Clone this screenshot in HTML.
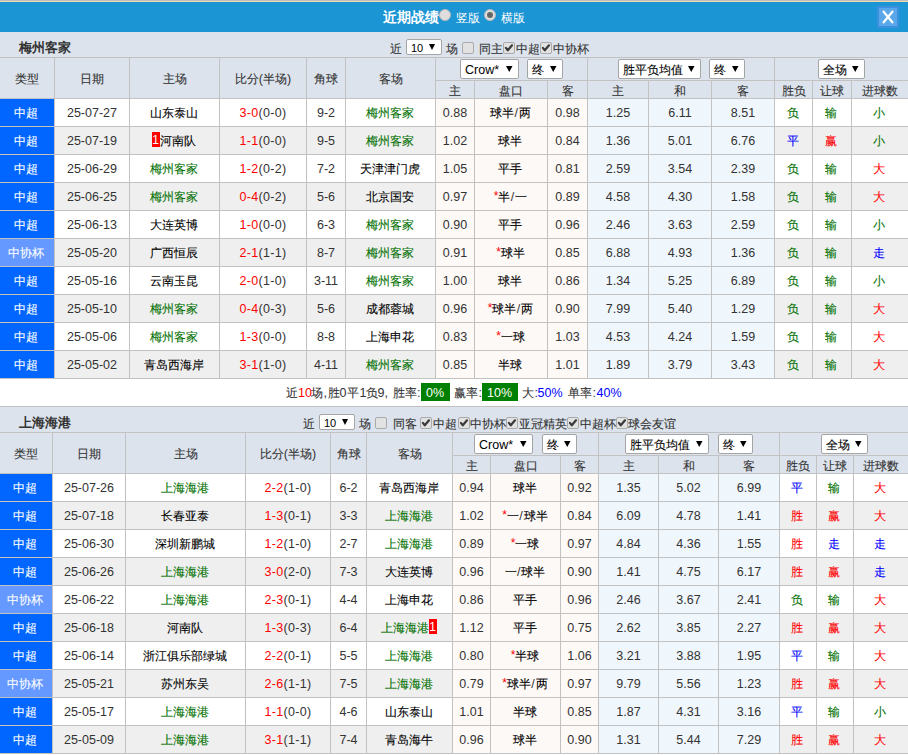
<!DOCTYPE html>
<html><head><meta charset="utf-8"><style>
html,body{margin:0;padding:0;background:#fff}
body{width:908px;height:755px;overflow:hidden;position:relative;font-family:"Liberation Sans",sans-serif;font-size:12.25px;color:#333}
.a{font-size:12.5px;letter-spacing:0px;position:relative;top:1px}
.c{position:relative;top:1px;font-size:12px;letter-spacing:0px;-webkit-text-stroke:0.1px currentColor}
.rc .a,.st .a,.gb .a{font-size:inherit}
.sl{margin:0 1px 0 0.5px}
.k>.a{color:#333}
.sc .a{letter-spacing:0.3px}
.ctl .c{font-size:12px;letter-spacing:0;top:2px}
body>div,body>span,body>svg{position:absolute}
.t{white-space:nowrap}
.rc{display:inline-block;background:#f00;color:#fff;width:8px;height:15px;line-height:15px;text-align:center;font-size:12px;vertical-align:0px;position:relative;top:-1px}
.st{color:#f00;font-size:12px;position:relative;top:-1px}
.ctl{white-space:nowrap;line-height:25px;color:#333;font-size:12px;display:block}
.cb{width:10px;height:10px;border:1px solid #aaa;border-radius:2px;background:#e2e2e2}
.sel{width:36px;height:16px;border:1px solid #a5a5a5;border-radius:2px;background:#fff;box-sizing:border-box}
.sel i,.sel2 i{font-style:normal;position:absolute;right:5px;top:0;font-size:10px}
.sel2{border:1px solid #a5a5a5;border-radius:2px;background:#fff;box-sizing:border-box}
.gb{display:inline-block;background:#008000;color:#fff;padding:0 4px;height:18px;line-height:18px;font-size:14px}
</style></head><body>
<div style="left:0px;top:0px;width:908px;height:1px;background:#bfbfbf;"></div>
<div style="left:0px;top:1px;width:908px;height:1px;background:#efd9a8;"></div>
<div style="left:0px;top:2px;width:908px;height:30px;background:#1b95d4;"></div>
<div class="t" style="left:383px;top:2px;height:30px;line-height:30px;color:#fff;font-size:14px;font-weight:bold;white-space:nowrap">近期战绩</div>
<div style="left:439px;top:9px;width:10px;height:10px;border-radius:50%;background:#dedede;border:1px solid #b9b9b9"></div>
<div class="t" style="left:456px;top:3px;height:30px;line-height:30px;color:#fff;font-size:12px;white-space:nowrap">竖版</div>
<div style="left:484px;top:9px;width:10px;height:10px;border-radius:50%;background:#dedede;border:1px solid #b9b9b9"></div>
<div style="left:487px;top:12px;width:6px;height:6px;border-radius:50%;background:#666"></div>
<div class="t" style="left:501px;top:3px;height:30px;line-height:30px;color:#fff;font-size:12px;white-space:nowrap">横版</div>
<div style="left:877px;top:6px;width:22px;height:22px;background:#3d8fe0;"></div>
<div style="left:879px;top:8px;width:18px;height:18px;background:#5aa8ea;"></div>
<svg style="position:absolute;left:877px;top:6px" width="22" height="22"><path d="M6 5 L16 17 M16 5 L6 17" stroke="#fff" stroke-width="2.2" fill="none"/></svg>
<div style="left:0px;top:32px;width:908px;height:25px;background:#dce3ec;"></div>
<div class="t" style="left:19px;top:35px;height:25px;line-height:25px;font-size:13px;font-weight:bold;color:#333;white-space:nowrap">梅州客家</div>
<div class="t ctl" style="left:389.5px;top:39px;height:16px;line-height:16px;font-size:12px"><span class="c">近</span></div>
<div class="sel" style="left:406px;top:39px"></div>
<div class="t" style="left:411px;top:40px;height:16px;line-height:16px;font-size:11px;color:#000">10</div>
<svg style="left:429px;top:44px" width="6" height="6"><path d="M0 0 L6 0 L3.0 6 Z" fill="#000"/></svg>
<div class="t ctl" style="left:445.5px;top:39px;height:16px;line-height:16px;font-size:12px"><span class="c">场</span></div>
<div class="cb" style="left:462px;top:42px"></div>
<div class="t ctl" style="left:479px;top:39px;height:16px;line-height:16px;font-size:12px"><span class="c">同主</span></div>
<div class="cb" style="left:503px;top:42px"><svg width="11" height="11" style="position:absolute;left:-1px;top:-1px"><path d="M2.9 5.9 L4.8 8.3 L9 3.3" stroke="#3a3a3a" stroke-width="2.2" stroke-linecap="round" stroke-linejoin="round" fill="none"/></svg></div>
<div class="t ctl" style="left:516px;top:39px;height:16px;line-height:16px;font-size:12px"><span class="c">中超</span></div>
<div class="cb" style="left:540px;top:42px"><svg width="11" height="11" style="position:absolute;left:-1px;top:-1px"><path d="M2.9 5.9 L4.8 8.3 L9 3.3" stroke="#3a3a3a" stroke-width="2.2" stroke-linecap="round" stroke-linejoin="round" fill="none"/></svg></div>
<div class="t ctl" style="left:553px;top:39px;height:16px;line-height:16px;font-size:12px"><span class="c">中协杯</span></div>
<div style="left:0px;top:57px;width:908px;height:1px;background:#c2c2c2;"></div>
<div style="left:0px;top:58px;width:908px;height:40px;background:#dce3ec;"></div>
<div style="left:435px;top:80px;width:473px;height:1px;background:#c2c2c2;"></div>
<div style="left:0px;top:98px;width:908px;height:1px;background:#c2c2c2;"></div>
<div style="left:54px;top:57px;width:1px;height:41px;background:#c2c2c2;"></div>
<div style="left:129px;top:57px;width:1px;height:41px;background:#c2c2c2;"></div>
<div style="left:219px;top:57px;width:1px;height:41px;background:#c2c2c2;"></div>
<div style="left:306px;top:57px;width:1px;height:41px;background:#c2c2c2;"></div>
<div style="left:345px;top:57px;width:1px;height:41px;background:#c2c2c2;"></div>
<div style="left:435px;top:57px;width:1px;height:41px;background:#c2c2c2;"></div>
<div style="left:474px;top:80px;width:1px;height:18px;background:#c2c2c2;"></div>
<div style="left:547px;top:80px;width:1px;height:18px;background:#c2c2c2;"></div>
<div style="left:587px;top:57px;width:1px;height:41px;background:#c2c2c2;"></div>
<div style="left:648px;top:80px;width:1px;height:18px;background:#c2c2c2;"></div>
<div style="left:711px;top:80px;width:1px;height:18px;background:#c2c2c2;"></div>
<div style="left:774px;top:57px;width:1px;height:41px;background:#c2c2c2;"></div>
<div style="left:812px;top:80px;width:1px;height:18px;background:#c2c2c2;"></div>
<div style="left:851px;top:80px;width:1px;height:18px;background:#c2c2c2;"></div>
<div class="t" style="left:0px;top:58px;width:54px;height:40px;line-height:40px;text-align:center;color:#333;"><span class="c">类型</span></div>
<div class="t" style="left:55px;top:58px;width:74px;height:40px;line-height:40px;text-align:center;color:#333;"><span class="c">日期</span></div>
<div class="t" style="left:130px;top:58px;width:89px;height:40px;line-height:40px;text-align:center;color:#333;"><span class="c">主场</span></div>
<div class="t" style="left:220px;top:58px;width:86px;height:40px;line-height:40px;text-align:center;color:#333;"><span class="c">比分</span><span class="a">(</span><span class="c">半场</span><span class="a">)</span></div>
<div class="t" style="left:307px;top:58px;width:38px;height:40px;line-height:40px;text-align:center;color:#333;"><span class="c">角球</span></div>
<div class="t" style="left:346px;top:58px;width:89px;height:40px;line-height:40px;text-align:center;color:#333;"><span class="c">客场</span></div>
<div class="t" style="left:436px;top:82px;width:38px;height:17px;line-height:17px;text-align:center;color:#333;"><span class="c">主</span></div>
<div class="t" style="left:475px;top:82px;width:72px;height:17px;line-height:17px;text-align:center;color:#333;"><span class="c">盘口</span></div>
<div class="t" style="left:548px;top:82px;width:39px;height:17px;line-height:17px;text-align:center;color:#333;"><span class="c">客</span></div>
<div class="t" style="left:588px;top:82px;width:60px;height:17px;line-height:17px;text-align:center;color:#333;"><span class="c">主</span></div>
<div class="t" style="left:649px;top:82px;width:62px;height:17px;line-height:17px;text-align:center;color:#333;"><span class="c">和</span></div>
<div class="t" style="left:712px;top:82px;width:62px;height:17px;line-height:17px;text-align:center;color:#333;"><span class="c">客</span></div>
<div class="t" style="left:775px;top:82px;width:37px;height:17px;line-height:17px;text-align:center;color:#333;"><span class="c">胜负</span></div>
<div class="t" style="left:813px;top:82px;width:38px;height:17px;line-height:17px;text-align:center;color:#333;"><span class="c">让球</span></div>
<div class="t" style="left:852px;top:82px;width:56px;height:17px;line-height:17px;text-align:center;color:#333;"><span class="c">进球数</span></div>
<div style="left:0px;top:99px;width:54px;height:27px;background:#0066ff;"></div>
<div style="left:55px;top:99px;width:380px;height:27px;background:#fff;"></div>
<div style="left:436px;top:99px;width:151px;height:27px;background:#fdf9f6;"></div>
<div style="left:588px;top:99px;width:186px;height:27px;background:#f0f7fc;"></div>
<div style="left:775px;top:99px;width:133px;height:27px;background:#fff;"></div>
<div style="left:0px;top:126px;width:908px;height:1px;background:#c2c2c2;"></div>
<div style="left:54px;top:99px;width:1px;height:27px;background:#c2c2c2;"></div>
<div style="left:129px;top:99px;width:1px;height:27px;background:#c2c2c2;"></div>
<div style="left:219px;top:99px;width:1px;height:27px;background:#c2c2c2;"></div>
<div style="left:306px;top:99px;width:1px;height:27px;background:#c2c2c2;"></div>
<div style="left:345px;top:99px;width:1px;height:27px;background:#c2c2c2;"></div>
<div style="left:435px;top:99px;width:1px;height:27px;background:#c2c2c2;"></div>
<div style="left:474px;top:99px;width:1px;height:27px;background:#c2c2c2;"></div>
<div style="left:547px;top:99px;width:1px;height:27px;background:#c2c2c2;"></div>
<div style="left:587px;top:99px;width:1px;height:27px;background:#c2c2c2;"></div>
<div style="left:648px;top:99px;width:1px;height:27px;background:#c2c2c2;"></div>
<div style="left:711px;top:99px;width:1px;height:27px;background:#c2c2c2;"></div>
<div style="left:774px;top:99px;width:1px;height:27px;background:#c2c2c2;"></div>
<div style="left:812px;top:99px;width:1px;height:27px;background:#c2c2c2;"></div>
<div style="left:851px;top:99px;width:1px;height:27px;background:#c2c2c2;"></div>
<div class="t d" style="left:-1px;top:99px;width:54px;height:27px;line-height:27px;text-align:center;color:#fff;"><span class="c">中超</span></div>
<div class="t d k" style="left:55px;top:99px;width:74px;height:27px;line-height:27px;text-align:center;color:#000;"><span class="a">25-07-27</span></div>
<div class="t d k" style="left:129px;top:99px;width:89px;height:27px;line-height:27px;text-align:center;color:#000;"><span class="c">山东泰山</span></div>
<div class="t d k sc" style="left:220px;top:99px;width:86px;height:27px;line-height:27px;text-align:center;color:#000;"><span style="color:#f00"><span class="a">3-0</span></span><span class="a">(0-0)</span></div>
<div class="t d k" style="left:307px;top:99px;width:38px;height:27px;line-height:27px;text-align:center;color:#000;"><span class="a">9-2</span></div>
<div class="t d" style="left:345px;top:99px;width:89px;height:27px;line-height:27px;text-align:center;color:#007000;"><span class="c">梅州客家</span></div>
<div class="t d k" style="left:436px;top:99px;width:38px;height:27px;line-height:27px;text-align:center;color:#000;"><span class="a">0.88</span></div>
<div class="t d k" style="left:474.5px;top:99px;width:72px;height:27px;line-height:27px;text-align:center;color:#000;"><span class="c">球半</span><span class="a sl">/</span><span class="c">两</span></div>
<div class="t d k" style="left:548px;top:99px;width:39px;height:27px;line-height:27px;text-align:center;color:#000;"><span class="a">0.98</span></div>
<div class="t d k" style="left:588px;top:99px;width:60px;height:27px;line-height:27px;text-align:center;color:#000;"><span class="a">1.25</span></div>
<div class="t d k" style="left:649px;top:99px;width:62px;height:27px;line-height:27px;text-align:center;color:#000;"><span class="a">6.11</span></div>
<div class="t d k" style="left:712px;top:99px;width:62px;height:27px;line-height:27px;text-align:center;color:#000;"><span class="a">8.51</span></div>
<div class="t d" style="left:774px;top:99px;width:37px;height:27px;line-height:27px;text-align:center;color:#007000;"><span class="c">负</span></div>
<div class="t d" style="left:812px;top:99px;width:38px;height:27px;line-height:27px;text-align:center;color:#007000;"><span class="c">输</span></div>
<div class="t d" style="left:851px;top:99px;width:56px;height:27px;line-height:27px;text-align:center;color:#007000;"><span class="c">小</span></div>
<div style="left:0px;top:127px;width:54px;height:27px;background:#0066ff;"></div>
<div style="left:55px;top:127px;width:380px;height:27px;background:#efefef;"></div>
<div style="left:436px;top:127px;width:151px;height:27px;background:#fdf9f6;"></div>
<div style="left:588px;top:127px;width:186px;height:27px;background:#f0f7fc;"></div>
<div style="left:775px;top:127px;width:133px;height:27px;background:#efefef;"></div>
<div style="left:0px;top:154px;width:908px;height:1px;background:#c2c2c2;"></div>
<div style="left:54px;top:127px;width:1px;height:27px;background:#c2c2c2;"></div>
<div style="left:129px;top:127px;width:1px;height:27px;background:#c2c2c2;"></div>
<div style="left:219px;top:127px;width:1px;height:27px;background:#c2c2c2;"></div>
<div style="left:306px;top:127px;width:1px;height:27px;background:#c2c2c2;"></div>
<div style="left:345px;top:127px;width:1px;height:27px;background:#c2c2c2;"></div>
<div style="left:435px;top:127px;width:1px;height:27px;background:#c2c2c2;"></div>
<div style="left:474px;top:127px;width:1px;height:27px;background:#c2c2c2;"></div>
<div style="left:547px;top:127px;width:1px;height:27px;background:#c2c2c2;"></div>
<div style="left:587px;top:127px;width:1px;height:27px;background:#c2c2c2;"></div>
<div style="left:648px;top:127px;width:1px;height:27px;background:#c2c2c2;"></div>
<div style="left:711px;top:127px;width:1px;height:27px;background:#c2c2c2;"></div>
<div style="left:774px;top:127px;width:1px;height:27px;background:#c2c2c2;"></div>
<div style="left:812px;top:127px;width:1px;height:27px;background:#c2c2c2;"></div>
<div style="left:851px;top:127px;width:1px;height:27px;background:#c2c2c2;"></div>
<div class="t d" style="left:-1px;top:127px;width:54px;height:27px;line-height:27px;text-align:center;color:#fff;"><span class="c">中超</span></div>
<div class="t d k" style="left:55px;top:127px;width:74px;height:27px;line-height:27px;text-align:center;color:#000;"><span class="a">25-07-19</span></div>
<div class="t d k" style="left:129px;top:127px;width:89px;height:27px;line-height:27px;text-align:center;color:#000;"><span class="rc"><span class="a">1</span></span><span class="c">河南队</span></div>
<div class="t d k sc" style="left:220px;top:127px;width:86px;height:27px;line-height:27px;text-align:center;color:#000;"><span style="color:#f00"><span class="a">1-1</span></span><span class="a">(0-0)</span></div>
<div class="t d k" style="left:307px;top:127px;width:38px;height:27px;line-height:27px;text-align:center;color:#000;"><span class="a">9-5</span></div>
<div class="t d" style="left:345px;top:127px;width:89px;height:27px;line-height:27px;text-align:center;color:#007000;"><span class="c">梅州客家</span></div>
<div class="t d k" style="left:436px;top:127px;width:38px;height:27px;line-height:27px;text-align:center;color:#000;"><span class="a">1.02</span></div>
<div class="t d k" style="left:474px;top:127px;width:72px;height:27px;line-height:27px;text-align:center;color:#000;"><span class="c">球半</span></div>
<div class="t d k" style="left:548px;top:127px;width:39px;height:27px;line-height:27px;text-align:center;color:#000;"><span class="a">0.84</span></div>
<div class="t d k" style="left:588px;top:127px;width:60px;height:27px;line-height:27px;text-align:center;color:#000;"><span class="a">1.36</span></div>
<div class="t d k" style="left:649px;top:127px;width:62px;height:27px;line-height:27px;text-align:center;color:#000;"><span class="a">5.01</span></div>
<div class="t d k" style="left:712px;top:127px;width:62px;height:27px;line-height:27px;text-align:center;color:#000;"><span class="a">6.76</span></div>
<div class="t d" style="left:774px;top:127px;width:37px;height:27px;line-height:27px;text-align:center;color:#00f;"><span class="c">平</span></div>
<div class="t d" style="left:812px;top:127px;width:38px;height:27px;line-height:27px;text-align:center;color:#f00;"><span class="c">赢</span></div>
<div class="t d" style="left:851px;top:127px;width:56px;height:27px;line-height:27px;text-align:center;color:#007000;"><span class="c">小</span></div>
<div style="left:0px;top:155px;width:54px;height:27px;background:#0066ff;"></div>
<div style="left:55px;top:155px;width:380px;height:27px;background:#fff;"></div>
<div style="left:436px;top:155px;width:151px;height:27px;background:#fdf9f6;"></div>
<div style="left:588px;top:155px;width:186px;height:27px;background:#f0f7fc;"></div>
<div style="left:775px;top:155px;width:133px;height:27px;background:#fff;"></div>
<div style="left:0px;top:182px;width:908px;height:1px;background:#c2c2c2;"></div>
<div style="left:54px;top:155px;width:1px;height:27px;background:#c2c2c2;"></div>
<div style="left:129px;top:155px;width:1px;height:27px;background:#c2c2c2;"></div>
<div style="left:219px;top:155px;width:1px;height:27px;background:#c2c2c2;"></div>
<div style="left:306px;top:155px;width:1px;height:27px;background:#c2c2c2;"></div>
<div style="left:345px;top:155px;width:1px;height:27px;background:#c2c2c2;"></div>
<div style="left:435px;top:155px;width:1px;height:27px;background:#c2c2c2;"></div>
<div style="left:474px;top:155px;width:1px;height:27px;background:#c2c2c2;"></div>
<div style="left:547px;top:155px;width:1px;height:27px;background:#c2c2c2;"></div>
<div style="left:587px;top:155px;width:1px;height:27px;background:#c2c2c2;"></div>
<div style="left:648px;top:155px;width:1px;height:27px;background:#c2c2c2;"></div>
<div style="left:711px;top:155px;width:1px;height:27px;background:#c2c2c2;"></div>
<div style="left:774px;top:155px;width:1px;height:27px;background:#c2c2c2;"></div>
<div style="left:812px;top:155px;width:1px;height:27px;background:#c2c2c2;"></div>
<div style="left:851px;top:155px;width:1px;height:27px;background:#c2c2c2;"></div>
<div class="t d" style="left:-1px;top:155px;width:54px;height:27px;line-height:27px;text-align:center;color:#fff;"><span class="c">中超</span></div>
<div class="t d k" style="left:55px;top:155px;width:74px;height:27px;line-height:27px;text-align:center;color:#000;"><span class="a">25-06-29</span></div>
<div class="t d" style="left:129px;top:155px;width:89px;height:27px;line-height:27px;text-align:center;color:#007000;"><span class="c">梅州客家</span></div>
<div class="t d k sc" style="left:220px;top:155px;width:86px;height:27px;line-height:27px;text-align:center;color:#000;"><span style="color:#f00"><span class="a">1-2</span></span><span class="a">(0-2)</span></div>
<div class="t d k" style="left:307px;top:155px;width:38px;height:27px;line-height:27px;text-align:center;color:#000;"><span class="a">7-2</span></div>
<div class="t d k" style="left:345px;top:155px;width:89px;height:27px;line-height:27px;text-align:center;color:#000;"><span class="c">天津津门虎</span></div>
<div class="t d k" style="left:436px;top:155px;width:38px;height:27px;line-height:27px;text-align:center;color:#000;"><span class="a">1.05</span></div>
<div class="t d k" style="left:474px;top:155px;width:72px;height:27px;line-height:27px;text-align:center;color:#000;"><span class="c">平手</span></div>
<div class="t d k" style="left:548px;top:155px;width:39px;height:27px;line-height:27px;text-align:center;color:#000;"><span class="a">0.81</span></div>
<div class="t d k" style="left:588px;top:155px;width:60px;height:27px;line-height:27px;text-align:center;color:#000;"><span class="a">2.59</span></div>
<div class="t d k" style="left:649px;top:155px;width:62px;height:27px;line-height:27px;text-align:center;color:#000;"><span class="a">3.54</span></div>
<div class="t d k" style="left:712px;top:155px;width:62px;height:27px;line-height:27px;text-align:center;color:#000;"><span class="a">2.39</span></div>
<div class="t d" style="left:774px;top:155px;width:37px;height:27px;line-height:27px;text-align:center;color:#007000;"><span class="c">负</span></div>
<div class="t d" style="left:812px;top:155px;width:38px;height:27px;line-height:27px;text-align:center;color:#007000;"><span class="c">输</span></div>
<div class="t d" style="left:851px;top:155px;width:56px;height:27px;line-height:27px;text-align:center;color:#f00;"><span class="c">大</span></div>
<div style="left:0px;top:183px;width:54px;height:27px;background:#0066ff;"></div>
<div style="left:55px;top:183px;width:380px;height:27px;background:#efefef;"></div>
<div style="left:436px;top:183px;width:151px;height:27px;background:#fdf9f6;"></div>
<div style="left:588px;top:183px;width:186px;height:27px;background:#f0f7fc;"></div>
<div style="left:775px;top:183px;width:133px;height:27px;background:#efefef;"></div>
<div style="left:0px;top:210px;width:908px;height:1px;background:#c2c2c2;"></div>
<div style="left:54px;top:183px;width:1px;height:27px;background:#c2c2c2;"></div>
<div style="left:129px;top:183px;width:1px;height:27px;background:#c2c2c2;"></div>
<div style="left:219px;top:183px;width:1px;height:27px;background:#c2c2c2;"></div>
<div style="left:306px;top:183px;width:1px;height:27px;background:#c2c2c2;"></div>
<div style="left:345px;top:183px;width:1px;height:27px;background:#c2c2c2;"></div>
<div style="left:435px;top:183px;width:1px;height:27px;background:#c2c2c2;"></div>
<div style="left:474px;top:183px;width:1px;height:27px;background:#c2c2c2;"></div>
<div style="left:547px;top:183px;width:1px;height:27px;background:#c2c2c2;"></div>
<div style="left:587px;top:183px;width:1px;height:27px;background:#c2c2c2;"></div>
<div style="left:648px;top:183px;width:1px;height:27px;background:#c2c2c2;"></div>
<div style="left:711px;top:183px;width:1px;height:27px;background:#c2c2c2;"></div>
<div style="left:774px;top:183px;width:1px;height:27px;background:#c2c2c2;"></div>
<div style="left:812px;top:183px;width:1px;height:27px;background:#c2c2c2;"></div>
<div style="left:851px;top:183px;width:1px;height:27px;background:#c2c2c2;"></div>
<div class="t d" style="left:-1px;top:183px;width:54px;height:27px;line-height:27px;text-align:center;color:#fff;"><span class="c">中超</span></div>
<div class="t d k" style="left:55px;top:183px;width:74px;height:27px;line-height:27px;text-align:center;color:#000;"><span class="a">25-06-25</span></div>
<div class="t d" style="left:129px;top:183px;width:89px;height:27px;line-height:27px;text-align:center;color:#007000;"><span class="c">梅州客家</span></div>
<div class="t d k sc" style="left:220px;top:183px;width:86px;height:27px;line-height:27px;text-align:center;color:#000;"><span style="color:#f00"><span class="a">0-4</span></span><span class="a">(0-2)</span></div>
<div class="t d k" style="left:307px;top:183px;width:38px;height:27px;line-height:27px;text-align:center;color:#000;"><span class="a">5-6</span></div>
<div class="t d k" style="left:345px;top:183px;width:89px;height:27px;line-height:27px;text-align:center;color:#000;"><span class="c">北京国安</span></div>
<div class="t d k" style="left:436px;top:183px;width:38px;height:27px;line-height:27px;text-align:center;color:#000;"><span class="a">0.97</span></div>
<div class="t d k" style="left:474.5px;top:183px;width:72px;height:27px;line-height:27px;text-align:center;color:#000;"><span class="st"><span class="a">*</span></span><span class="c">半</span><span class="a sl">/</span><span class="c">一</span></div>
<div class="t d k" style="left:548px;top:183px;width:39px;height:27px;line-height:27px;text-align:center;color:#000;"><span class="a">0.89</span></div>
<div class="t d k" style="left:588px;top:183px;width:60px;height:27px;line-height:27px;text-align:center;color:#000;"><span class="a">4.58</span></div>
<div class="t d k" style="left:649px;top:183px;width:62px;height:27px;line-height:27px;text-align:center;color:#000;"><span class="a">4.30</span></div>
<div class="t d k" style="left:712px;top:183px;width:62px;height:27px;line-height:27px;text-align:center;color:#000;"><span class="a">1.58</span></div>
<div class="t d" style="left:774px;top:183px;width:37px;height:27px;line-height:27px;text-align:center;color:#007000;"><span class="c">负</span></div>
<div class="t d" style="left:812px;top:183px;width:38px;height:27px;line-height:27px;text-align:center;color:#007000;"><span class="c">输</span></div>
<div class="t d" style="left:851px;top:183px;width:56px;height:27px;line-height:27px;text-align:center;color:#f00;"><span class="c">大</span></div>
<div style="left:0px;top:211px;width:54px;height:27px;background:#0066ff;"></div>
<div style="left:55px;top:211px;width:380px;height:27px;background:#fff;"></div>
<div style="left:436px;top:211px;width:151px;height:27px;background:#fdf9f6;"></div>
<div style="left:588px;top:211px;width:186px;height:27px;background:#f0f7fc;"></div>
<div style="left:775px;top:211px;width:133px;height:27px;background:#fff;"></div>
<div style="left:0px;top:238px;width:908px;height:1px;background:#c2c2c2;"></div>
<div style="left:54px;top:211px;width:1px;height:27px;background:#c2c2c2;"></div>
<div style="left:129px;top:211px;width:1px;height:27px;background:#c2c2c2;"></div>
<div style="left:219px;top:211px;width:1px;height:27px;background:#c2c2c2;"></div>
<div style="left:306px;top:211px;width:1px;height:27px;background:#c2c2c2;"></div>
<div style="left:345px;top:211px;width:1px;height:27px;background:#c2c2c2;"></div>
<div style="left:435px;top:211px;width:1px;height:27px;background:#c2c2c2;"></div>
<div style="left:474px;top:211px;width:1px;height:27px;background:#c2c2c2;"></div>
<div style="left:547px;top:211px;width:1px;height:27px;background:#c2c2c2;"></div>
<div style="left:587px;top:211px;width:1px;height:27px;background:#c2c2c2;"></div>
<div style="left:648px;top:211px;width:1px;height:27px;background:#c2c2c2;"></div>
<div style="left:711px;top:211px;width:1px;height:27px;background:#c2c2c2;"></div>
<div style="left:774px;top:211px;width:1px;height:27px;background:#c2c2c2;"></div>
<div style="left:812px;top:211px;width:1px;height:27px;background:#c2c2c2;"></div>
<div style="left:851px;top:211px;width:1px;height:27px;background:#c2c2c2;"></div>
<div class="t d" style="left:-1px;top:211px;width:54px;height:27px;line-height:27px;text-align:center;color:#fff;"><span class="c">中超</span></div>
<div class="t d k" style="left:55px;top:211px;width:74px;height:27px;line-height:27px;text-align:center;color:#000;"><span class="a">25-06-13</span></div>
<div class="t d k" style="left:129px;top:211px;width:89px;height:27px;line-height:27px;text-align:center;color:#000;"><span class="c">大连英博</span></div>
<div class="t d k sc" style="left:220px;top:211px;width:86px;height:27px;line-height:27px;text-align:center;color:#000;"><span style="color:#f00"><span class="a">1-0</span></span><span class="a">(0-0)</span></div>
<div class="t d k" style="left:307px;top:211px;width:38px;height:27px;line-height:27px;text-align:center;color:#000;"><span class="a">6-3</span></div>
<div class="t d" style="left:345px;top:211px;width:89px;height:27px;line-height:27px;text-align:center;color:#007000;"><span class="c">梅州客家</span></div>
<div class="t d k" style="left:436px;top:211px;width:38px;height:27px;line-height:27px;text-align:center;color:#000;"><span class="a">0.90</span></div>
<div class="t d k" style="left:474px;top:211px;width:72px;height:27px;line-height:27px;text-align:center;color:#000;"><span class="c">平手</span></div>
<div class="t d k" style="left:548px;top:211px;width:39px;height:27px;line-height:27px;text-align:center;color:#000;"><span class="a">0.96</span></div>
<div class="t d k" style="left:588px;top:211px;width:60px;height:27px;line-height:27px;text-align:center;color:#000;"><span class="a">2.46</span></div>
<div class="t d k" style="left:649px;top:211px;width:62px;height:27px;line-height:27px;text-align:center;color:#000;"><span class="a">3.63</span></div>
<div class="t d k" style="left:712px;top:211px;width:62px;height:27px;line-height:27px;text-align:center;color:#000;"><span class="a">2.59</span></div>
<div class="t d" style="left:774px;top:211px;width:37px;height:27px;line-height:27px;text-align:center;color:#007000;"><span class="c">负</span></div>
<div class="t d" style="left:812px;top:211px;width:38px;height:27px;line-height:27px;text-align:center;color:#007000;"><span class="c">输</span></div>
<div class="t d" style="left:851px;top:211px;width:56px;height:27px;line-height:27px;text-align:center;color:#007000;"><span class="c">小</span></div>
<div style="left:0px;top:239px;width:54px;height:27px;background:#6699ff;"></div>
<div style="left:55px;top:239px;width:380px;height:27px;background:#efefef;"></div>
<div style="left:436px;top:239px;width:151px;height:27px;background:#fdf9f6;"></div>
<div style="left:588px;top:239px;width:186px;height:27px;background:#f0f7fc;"></div>
<div style="left:775px;top:239px;width:133px;height:27px;background:#efefef;"></div>
<div style="left:0px;top:266px;width:908px;height:1px;background:#c2c2c2;"></div>
<div style="left:54px;top:239px;width:1px;height:27px;background:#c2c2c2;"></div>
<div style="left:129px;top:239px;width:1px;height:27px;background:#c2c2c2;"></div>
<div style="left:219px;top:239px;width:1px;height:27px;background:#c2c2c2;"></div>
<div style="left:306px;top:239px;width:1px;height:27px;background:#c2c2c2;"></div>
<div style="left:345px;top:239px;width:1px;height:27px;background:#c2c2c2;"></div>
<div style="left:435px;top:239px;width:1px;height:27px;background:#c2c2c2;"></div>
<div style="left:474px;top:239px;width:1px;height:27px;background:#c2c2c2;"></div>
<div style="left:547px;top:239px;width:1px;height:27px;background:#c2c2c2;"></div>
<div style="left:587px;top:239px;width:1px;height:27px;background:#c2c2c2;"></div>
<div style="left:648px;top:239px;width:1px;height:27px;background:#c2c2c2;"></div>
<div style="left:711px;top:239px;width:1px;height:27px;background:#c2c2c2;"></div>
<div style="left:774px;top:239px;width:1px;height:27px;background:#c2c2c2;"></div>
<div style="left:812px;top:239px;width:1px;height:27px;background:#c2c2c2;"></div>
<div style="left:851px;top:239px;width:1px;height:27px;background:#c2c2c2;"></div>
<div class="t d" style="left:-1px;top:239px;width:54px;height:27px;line-height:27px;text-align:center;color:#fff;"><span class="c">中协杯</span></div>
<div class="t d k" style="left:55px;top:239px;width:74px;height:27px;line-height:27px;text-align:center;color:#000;"><span class="a">25-05-20</span></div>
<div class="t d k" style="left:129px;top:239px;width:89px;height:27px;line-height:27px;text-align:center;color:#000;"><span class="c">广西恒辰</span></div>
<div class="t d k sc" style="left:220px;top:239px;width:86px;height:27px;line-height:27px;text-align:center;color:#000;"><span style="color:#f00"><span class="a">2-1</span></span><span class="a">(1-1)</span></div>
<div class="t d k" style="left:307px;top:239px;width:38px;height:27px;line-height:27px;text-align:center;color:#000;"><span class="a">8-7</span></div>
<div class="t d" style="left:345px;top:239px;width:89px;height:27px;line-height:27px;text-align:center;color:#007000;"><span class="c">梅州客家</span></div>
<div class="t d k" style="left:436px;top:239px;width:38px;height:27px;line-height:27px;text-align:center;color:#000;"><span class="a">0.91</span></div>
<div class="t d k" style="left:474.5px;top:239px;width:72px;height:27px;line-height:27px;text-align:center;color:#000;"><span class="st"><span class="a">*</span></span><span class="c">球半</span></div>
<div class="t d k" style="left:548px;top:239px;width:39px;height:27px;line-height:27px;text-align:center;color:#000;"><span class="a">0.85</span></div>
<div class="t d k" style="left:588px;top:239px;width:60px;height:27px;line-height:27px;text-align:center;color:#000;"><span class="a">6.88</span></div>
<div class="t d k" style="left:649px;top:239px;width:62px;height:27px;line-height:27px;text-align:center;color:#000;"><span class="a">4.93</span></div>
<div class="t d k" style="left:712px;top:239px;width:62px;height:27px;line-height:27px;text-align:center;color:#000;"><span class="a">1.36</span></div>
<div class="t d" style="left:774px;top:239px;width:37px;height:27px;line-height:27px;text-align:center;color:#007000;"><span class="c">负</span></div>
<div class="t d" style="left:812px;top:239px;width:38px;height:27px;line-height:27px;text-align:center;color:#007000;"><span class="c">输</span></div>
<div class="t d" style="left:851px;top:239px;width:56px;height:27px;line-height:27px;text-align:center;color:#00f;"><span class="c">走</span></div>
<div style="left:0px;top:267px;width:54px;height:27px;background:#0066ff;"></div>
<div style="left:55px;top:267px;width:380px;height:27px;background:#fff;"></div>
<div style="left:436px;top:267px;width:151px;height:27px;background:#fdf9f6;"></div>
<div style="left:588px;top:267px;width:186px;height:27px;background:#f0f7fc;"></div>
<div style="left:775px;top:267px;width:133px;height:27px;background:#fff;"></div>
<div style="left:0px;top:294px;width:908px;height:1px;background:#c2c2c2;"></div>
<div style="left:54px;top:267px;width:1px;height:27px;background:#c2c2c2;"></div>
<div style="left:129px;top:267px;width:1px;height:27px;background:#c2c2c2;"></div>
<div style="left:219px;top:267px;width:1px;height:27px;background:#c2c2c2;"></div>
<div style="left:306px;top:267px;width:1px;height:27px;background:#c2c2c2;"></div>
<div style="left:345px;top:267px;width:1px;height:27px;background:#c2c2c2;"></div>
<div style="left:435px;top:267px;width:1px;height:27px;background:#c2c2c2;"></div>
<div style="left:474px;top:267px;width:1px;height:27px;background:#c2c2c2;"></div>
<div style="left:547px;top:267px;width:1px;height:27px;background:#c2c2c2;"></div>
<div style="left:587px;top:267px;width:1px;height:27px;background:#c2c2c2;"></div>
<div style="left:648px;top:267px;width:1px;height:27px;background:#c2c2c2;"></div>
<div style="left:711px;top:267px;width:1px;height:27px;background:#c2c2c2;"></div>
<div style="left:774px;top:267px;width:1px;height:27px;background:#c2c2c2;"></div>
<div style="left:812px;top:267px;width:1px;height:27px;background:#c2c2c2;"></div>
<div style="left:851px;top:267px;width:1px;height:27px;background:#c2c2c2;"></div>
<div class="t d" style="left:-1px;top:267px;width:54px;height:27px;line-height:27px;text-align:center;color:#fff;"><span class="c">中超</span></div>
<div class="t d k" style="left:55px;top:267px;width:74px;height:27px;line-height:27px;text-align:center;color:#000;"><span class="a">25-05-16</span></div>
<div class="t d k" style="left:129px;top:267px;width:89px;height:27px;line-height:27px;text-align:center;color:#000;"><span class="c">云南玉昆</span></div>
<div class="t d k sc" style="left:220px;top:267px;width:86px;height:27px;line-height:27px;text-align:center;color:#000;"><span style="color:#f00"><span class="a">2-0</span></span><span class="a">(1-0)</span></div>
<div class="t d k" style="left:307px;top:267px;width:38px;height:27px;line-height:27px;text-align:center;color:#000;"><span class="a">3-11</span></div>
<div class="t d" style="left:345px;top:267px;width:89px;height:27px;line-height:27px;text-align:center;color:#007000;"><span class="c">梅州客家</span></div>
<div class="t d k" style="left:436px;top:267px;width:38px;height:27px;line-height:27px;text-align:center;color:#000;"><span class="a">1.00</span></div>
<div class="t d k" style="left:474px;top:267px;width:72px;height:27px;line-height:27px;text-align:center;color:#000;"><span class="c">球半</span></div>
<div class="t d k" style="left:548px;top:267px;width:39px;height:27px;line-height:27px;text-align:center;color:#000;"><span class="a">0.86</span></div>
<div class="t d k" style="left:588px;top:267px;width:60px;height:27px;line-height:27px;text-align:center;color:#000;"><span class="a">1.34</span></div>
<div class="t d k" style="left:649px;top:267px;width:62px;height:27px;line-height:27px;text-align:center;color:#000;"><span class="a">5.25</span></div>
<div class="t d k" style="left:712px;top:267px;width:62px;height:27px;line-height:27px;text-align:center;color:#000;"><span class="a">6.89</span></div>
<div class="t d" style="left:774px;top:267px;width:37px;height:27px;line-height:27px;text-align:center;color:#007000;"><span class="c">负</span></div>
<div class="t d" style="left:812px;top:267px;width:38px;height:27px;line-height:27px;text-align:center;color:#007000;"><span class="c">输</span></div>
<div class="t d" style="left:851px;top:267px;width:56px;height:27px;line-height:27px;text-align:center;color:#007000;"><span class="c">小</span></div>
<div style="left:0px;top:295px;width:54px;height:27px;background:#0066ff;"></div>
<div style="left:55px;top:295px;width:380px;height:27px;background:#efefef;"></div>
<div style="left:436px;top:295px;width:151px;height:27px;background:#fdf9f6;"></div>
<div style="left:588px;top:295px;width:186px;height:27px;background:#f0f7fc;"></div>
<div style="left:775px;top:295px;width:133px;height:27px;background:#efefef;"></div>
<div style="left:0px;top:322px;width:908px;height:1px;background:#c2c2c2;"></div>
<div style="left:54px;top:295px;width:1px;height:27px;background:#c2c2c2;"></div>
<div style="left:129px;top:295px;width:1px;height:27px;background:#c2c2c2;"></div>
<div style="left:219px;top:295px;width:1px;height:27px;background:#c2c2c2;"></div>
<div style="left:306px;top:295px;width:1px;height:27px;background:#c2c2c2;"></div>
<div style="left:345px;top:295px;width:1px;height:27px;background:#c2c2c2;"></div>
<div style="left:435px;top:295px;width:1px;height:27px;background:#c2c2c2;"></div>
<div style="left:474px;top:295px;width:1px;height:27px;background:#c2c2c2;"></div>
<div style="left:547px;top:295px;width:1px;height:27px;background:#c2c2c2;"></div>
<div style="left:587px;top:295px;width:1px;height:27px;background:#c2c2c2;"></div>
<div style="left:648px;top:295px;width:1px;height:27px;background:#c2c2c2;"></div>
<div style="left:711px;top:295px;width:1px;height:27px;background:#c2c2c2;"></div>
<div style="left:774px;top:295px;width:1px;height:27px;background:#c2c2c2;"></div>
<div style="left:812px;top:295px;width:1px;height:27px;background:#c2c2c2;"></div>
<div style="left:851px;top:295px;width:1px;height:27px;background:#c2c2c2;"></div>
<div class="t d" style="left:-1px;top:295px;width:54px;height:27px;line-height:27px;text-align:center;color:#fff;"><span class="c">中超</span></div>
<div class="t d k" style="left:55px;top:295px;width:74px;height:27px;line-height:27px;text-align:center;color:#000;"><span class="a">25-05-10</span></div>
<div class="t d" style="left:129px;top:295px;width:89px;height:27px;line-height:27px;text-align:center;color:#007000;"><span class="c">梅州客家</span></div>
<div class="t d k sc" style="left:220px;top:295px;width:86px;height:27px;line-height:27px;text-align:center;color:#000;"><span style="color:#f00"><span class="a">0-4</span></span><span class="a">(0-3)</span></div>
<div class="t d k" style="left:307px;top:295px;width:38px;height:27px;line-height:27px;text-align:center;color:#000;"><span class="a">5-6</span></div>
<div class="t d k" style="left:345px;top:295px;width:89px;height:27px;line-height:27px;text-align:center;color:#000;"><span class="c">成都蓉城</span></div>
<div class="t d k" style="left:436px;top:295px;width:38px;height:27px;line-height:27px;text-align:center;color:#000;"><span class="a">0.96</span></div>
<div class="t d k" style="left:474.5px;top:295px;width:72px;height:27px;line-height:27px;text-align:center;color:#000;"><span class="st"><span class="a">*</span></span><span class="c">球半</span><span class="a sl">/</span><span class="c">两</span></div>
<div class="t d k" style="left:548px;top:295px;width:39px;height:27px;line-height:27px;text-align:center;color:#000;"><span class="a">0.90</span></div>
<div class="t d k" style="left:588px;top:295px;width:60px;height:27px;line-height:27px;text-align:center;color:#000;"><span class="a">7.99</span></div>
<div class="t d k" style="left:649px;top:295px;width:62px;height:27px;line-height:27px;text-align:center;color:#000;"><span class="a">5.40</span></div>
<div class="t d k" style="left:712px;top:295px;width:62px;height:27px;line-height:27px;text-align:center;color:#000;"><span class="a">1.29</span></div>
<div class="t d" style="left:774px;top:295px;width:37px;height:27px;line-height:27px;text-align:center;color:#007000;"><span class="c">负</span></div>
<div class="t d" style="left:812px;top:295px;width:38px;height:27px;line-height:27px;text-align:center;color:#007000;"><span class="c">输</span></div>
<div class="t d" style="left:851px;top:295px;width:56px;height:27px;line-height:27px;text-align:center;color:#f00;"><span class="c">大</span></div>
<div style="left:0px;top:323px;width:54px;height:27px;background:#0066ff;"></div>
<div style="left:55px;top:323px;width:380px;height:27px;background:#fff;"></div>
<div style="left:436px;top:323px;width:151px;height:27px;background:#fdf9f6;"></div>
<div style="left:588px;top:323px;width:186px;height:27px;background:#f0f7fc;"></div>
<div style="left:775px;top:323px;width:133px;height:27px;background:#fff;"></div>
<div style="left:0px;top:350px;width:908px;height:1px;background:#c2c2c2;"></div>
<div style="left:54px;top:323px;width:1px;height:27px;background:#c2c2c2;"></div>
<div style="left:129px;top:323px;width:1px;height:27px;background:#c2c2c2;"></div>
<div style="left:219px;top:323px;width:1px;height:27px;background:#c2c2c2;"></div>
<div style="left:306px;top:323px;width:1px;height:27px;background:#c2c2c2;"></div>
<div style="left:345px;top:323px;width:1px;height:27px;background:#c2c2c2;"></div>
<div style="left:435px;top:323px;width:1px;height:27px;background:#c2c2c2;"></div>
<div style="left:474px;top:323px;width:1px;height:27px;background:#c2c2c2;"></div>
<div style="left:547px;top:323px;width:1px;height:27px;background:#c2c2c2;"></div>
<div style="left:587px;top:323px;width:1px;height:27px;background:#c2c2c2;"></div>
<div style="left:648px;top:323px;width:1px;height:27px;background:#c2c2c2;"></div>
<div style="left:711px;top:323px;width:1px;height:27px;background:#c2c2c2;"></div>
<div style="left:774px;top:323px;width:1px;height:27px;background:#c2c2c2;"></div>
<div style="left:812px;top:323px;width:1px;height:27px;background:#c2c2c2;"></div>
<div style="left:851px;top:323px;width:1px;height:27px;background:#c2c2c2;"></div>
<div class="t d" style="left:-1px;top:323px;width:54px;height:27px;line-height:27px;text-align:center;color:#fff;"><span class="c">中超</span></div>
<div class="t d k" style="left:55px;top:323px;width:74px;height:27px;line-height:27px;text-align:center;color:#000;"><span class="a">25-05-06</span></div>
<div class="t d" style="left:129px;top:323px;width:89px;height:27px;line-height:27px;text-align:center;color:#007000;"><span class="c">梅州客家</span></div>
<div class="t d k sc" style="left:220px;top:323px;width:86px;height:27px;line-height:27px;text-align:center;color:#000;"><span style="color:#f00"><span class="a">1-3</span></span><span class="a">(0-0)</span></div>
<div class="t d k" style="left:307px;top:323px;width:38px;height:27px;line-height:27px;text-align:center;color:#000;"><span class="a">8-8</span></div>
<div class="t d k" style="left:345px;top:323px;width:89px;height:27px;line-height:27px;text-align:center;color:#000;"><span class="c">上海申花</span></div>
<div class="t d k" style="left:436px;top:323px;width:38px;height:27px;line-height:27px;text-align:center;color:#000;"><span class="a">0.83</span></div>
<div class="t d k" style="left:474.5px;top:323px;width:72px;height:27px;line-height:27px;text-align:center;color:#000;"><span class="st"><span class="a">*</span></span><span class="c">一球</span></div>
<div class="t d k" style="left:548px;top:323px;width:39px;height:27px;line-height:27px;text-align:center;color:#000;"><span class="a">1.03</span></div>
<div class="t d k" style="left:588px;top:323px;width:60px;height:27px;line-height:27px;text-align:center;color:#000;"><span class="a">4.53</span></div>
<div class="t d k" style="left:649px;top:323px;width:62px;height:27px;line-height:27px;text-align:center;color:#000;"><span class="a">4.24</span></div>
<div class="t d k" style="left:712px;top:323px;width:62px;height:27px;line-height:27px;text-align:center;color:#000;"><span class="a">1.59</span></div>
<div class="t d" style="left:774px;top:323px;width:37px;height:27px;line-height:27px;text-align:center;color:#007000;"><span class="c">负</span></div>
<div class="t d" style="left:812px;top:323px;width:38px;height:27px;line-height:27px;text-align:center;color:#007000;"><span class="c">输</span></div>
<div class="t d" style="left:851px;top:323px;width:56px;height:27px;line-height:27px;text-align:center;color:#f00;"><span class="c">大</span></div>
<div style="left:0px;top:351px;width:54px;height:27px;background:#0066ff;"></div>
<div style="left:55px;top:351px;width:380px;height:27px;background:#efefef;"></div>
<div style="left:436px;top:351px;width:151px;height:27px;background:#fdf9f6;"></div>
<div style="left:588px;top:351px;width:186px;height:27px;background:#f0f7fc;"></div>
<div style="left:775px;top:351px;width:133px;height:27px;background:#efefef;"></div>
<div style="left:0px;top:378px;width:908px;height:1px;background:#c2c2c2;"></div>
<div style="left:54px;top:351px;width:1px;height:27px;background:#c2c2c2;"></div>
<div style="left:129px;top:351px;width:1px;height:27px;background:#c2c2c2;"></div>
<div style="left:219px;top:351px;width:1px;height:27px;background:#c2c2c2;"></div>
<div style="left:306px;top:351px;width:1px;height:27px;background:#c2c2c2;"></div>
<div style="left:345px;top:351px;width:1px;height:27px;background:#c2c2c2;"></div>
<div style="left:435px;top:351px;width:1px;height:27px;background:#c2c2c2;"></div>
<div style="left:474px;top:351px;width:1px;height:27px;background:#c2c2c2;"></div>
<div style="left:547px;top:351px;width:1px;height:27px;background:#c2c2c2;"></div>
<div style="left:587px;top:351px;width:1px;height:27px;background:#c2c2c2;"></div>
<div style="left:648px;top:351px;width:1px;height:27px;background:#c2c2c2;"></div>
<div style="left:711px;top:351px;width:1px;height:27px;background:#c2c2c2;"></div>
<div style="left:774px;top:351px;width:1px;height:27px;background:#c2c2c2;"></div>
<div style="left:812px;top:351px;width:1px;height:27px;background:#c2c2c2;"></div>
<div style="left:851px;top:351px;width:1px;height:27px;background:#c2c2c2;"></div>
<div class="t d" style="left:-1px;top:351px;width:54px;height:27px;line-height:27px;text-align:center;color:#fff;"><span class="c">中超</span></div>
<div class="t d k" style="left:55px;top:351px;width:74px;height:27px;line-height:27px;text-align:center;color:#000;"><span class="a">25-05-02</span></div>
<div class="t d k" style="left:129px;top:351px;width:89px;height:27px;line-height:27px;text-align:center;color:#000;"><span class="c">青岛西海岸</span></div>
<div class="t d k sc" style="left:220px;top:351px;width:86px;height:27px;line-height:27px;text-align:center;color:#000;"><span style="color:#f00"><span class="a">3-1</span></span><span class="a">(1-0)</span></div>
<div class="t d k" style="left:307px;top:351px;width:38px;height:27px;line-height:27px;text-align:center;color:#000;"><span class="a">4-11</span></div>
<div class="t d" style="left:345px;top:351px;width:89px;height:27px;line-height:27px;text-align:center;color:#007000;"><span class="c">梅州客家</span></div>
<div class="t d k" style="left:436px;top:351px;width:38px;height:27px;line-height:27px;text-align:center;color:#000;"><span class="a">0.85</span></div>
<div class="t d k" style="left:474px;top:351px;width:72px;height:27px;line-height:27px;text-align:center;color:#000;"><span class="c">半球</span></div>
<div class="t d k" style="left:548px;top:351px;width:39px;height:27px;line-height:27px;text-align:center;color:#000;"><span class="a">1.01</span></div>
<div class="t d k" style="left:588px;top:351px;width:60px;height:27px;line-height:27px;text-align:center;color:#000;"><span class="a">1.89</span></div>
<div class="t d k" style="left:649px;top:351px;width:62px;height:27px;line-height:27px;text-align:center;color:#000;"><span class="a">3.79</span></div>
<div class="t d k" style="left:712px;top:351px;width:62px;height:27px;line-height:27px;text-align:center;color:#000;"><span class="a">3.43</span></div>
<div class="t d" style="left:774px;top:351px;width:37px;height:27px;line-height:27px;text-align:center;color:#007000;"><span class="c">负</span></div>
<div class="t d" style="left:812px;top:351px;width:38px;height:27px;line-height:27px;text-align:center;color:#007000;"><span class="c">输</span></div>
<div class="t d" style="left:851px;top:351px;width:56px;height:27px;line-height:27px;text-align:center;color:#f00;"><span class="c">大</span></div>
<div style="left:0px;top:379px;width:908px;height:27px;background:#fff;"></div>
<div style="left:421px;top:383px;width:29px;height:18px;background:#008000;"></div>
<div style="left:482px;top:383px;width:36px;height:18px;background:#008000;"></div>
<div class="t" style="left:285.5px;top:383px;height:18px;line-height:18px;color:#333"><span class="c">近</span></div>
<div class="t" style="left:298px;top:383px;height:18px;line-height:18px;color:#f00"><span class="a">10</span></div>
<div class="t" style="left:311px;top:383px;height:18px;line-height:18px;color:#333"><span class="c">场</span></div>
<div class="t" style="left:323.5px;top:383px;height:18px;line-height:18px;color:#333"><span class="a">,</span></div>
<div class="t" style="left:327.5px;top:383px;height:18px;line-height:18px;color:#333"><span class="c">胜</span></div>
<div class="t" style="left:339.5px;top:383px;height:18px;line-height:18px;color:#333"><span class="a">0</span></div>
<div class="t" style="left:347px;top:383px;height:18px;line-height:18px;color:#333"><span class="c">平</span></div>
<div class="t" style="left:359.5px;top:383px;height:18px;line-height:18px;color:#333"><span class="a">1</span></div>
<div class="t" style="left:365.5px;top:383px;height:18px;line-height:18px;color:#333"><span class="c">负</span></div>
<div class="t" style="left:377.5px;top:383px;height:18px;line-height:18px;color:#333"><span class="a">9</span></div>
<div class="t" style="left:384.5px;top:383px;height:18px;line-height:18px;color:#333"><span class="a">,</span></div>
<div class="t" style="left:392.5px;top:383px;height:18px;line-height:18px;color:#333"><span class="c">胜率</span></div>
<div class="t" style="left:417px;top:383px;height:18px;line-height:18px;color:#333"><span class="a">:</span></div>
<div class="t" style="left:426px;top:383px;height:18px;line-height:18px;color:#fff"><span class="a">0%</span></div>
<div class="t" style="left:454px;top:383px;height:18px;line-height:18px;color:#333"><span class="c">赢率</span></div>
<div class="t" style="left:478.5px;top:383px;height:18px;line-height:18px;color:#333"><span class="a">:</span></div>
<div class="t" style="left:487px;top:383px;height:18px;line-height:18px;color:#fff"><span class="a">10%</span></div>
<div class="t" style="left:521.5px;top:383px;height:18px;line-height:18px;color:#333"><span class="c">大</span></div>
<div class="t" style="left:534.5px;top:383px;height:18px;line-height:18px;color:#333"><span class="a">:</span></div>
<div class="t" style="left:537.5px;top:383px;height:18px;line-height:18px;color:#00f"><span class="a">50%</span></div>
<div class="t" style="left:568px;top:383px;height:18px;line-height:18px;color:#333"><span class="c">单率</span></div>
<div class="t" style="left:592.5px;top:383px;height:18px;line-height:18px;color:#333"><span class="a">:</span></div>
<div class="t" style="left:596.5px;top:383px;height:18px;line-height:18px;color:#00f"><span class="a">40%</span></div>
<div style="left:0px;top:406px;width:908px;height:1px;background:#c2c2c2;"></div>
<div style="left:0px;top:407px;width:908px;height:25px;background:#dce3ec;"></div>
<div class="t" style="left:19px;top:410px;height:25px;line-height:25px;font-size:13px;font-weight:bold;color:#333;white-space:nowrap">上海海港</div>
<div class="t ctl" style="left:302.5px;top:414px;height:16px;line-height:16px;font-size:12px"><span class="c">近</span></div>
<div class="sel" style="left:319px;top:414px"></div>
<div class="t" style="left:324px;top:415px;height:16px;line-height:16px;font-size:11px;color:#000">10</div>
<svg style="left:342px;top:419px" width="6" height="6"><path d="M0 0 L6 0 L3.0 6 Z" fill="#000"/></svg>
<div class="t ctl" style="left:359px;top:414px;height:16px;line-height:16px;font-size:12px"><span class="c">场</span></div>
<div class="cb" style="left:375px;top:417px"></div>
<div class="t ctl" style="left:392.5px;top:414px;height:16px;line-height:16px;font-size:12px"><span class="c">同客</span></div>
<div class="cb" style="left:420px;top:417px"><svg width="11" height="11" style="position:absolute;left:-1px;top:-1px"><path d="M2.9 5.9 L4.8 8.3 L9 3.3" stroke="#3a3a3a" stroke-width="2.2" stroke-linecap="round" stroke-linejoin="round" fill="none"/></svg></div>
<div class="t ctl" style="left:432.5px;top:414px;height:16px;line-height:16px;font-size:12px"><span class="c">中超</span></div>
<div class="cb" style="left:458px;top:417px"><svg width="11" height="11" style="position:absolute;left:-1px;top:-1px"><path d="M2.9 5.9 L4.8 8.3 L9 3.3" stroke="#3a3a3a" stroke-width="2.2" stroke-linecap="round" stroke-linejoin="round" fill="none"/></svg></div>
<div class="t ctl" style="left:470px;top:414px;height:16px;line-height:16px;font-size:12px"><span class="c">中协杯</span></div>
<div class="cb" style="left:506px;top:417px"><svg width="11" height="11" style="position:absolute;left:-1px;top:-1px"><path d="M2.9 5.9 L4.8 8.3 L9 3.3" stroke="#3a3a3a" stroke-width="2.2" stroke-linecap="round" stroke-linejoin="round" fill="none"/></svg></div>
<div class="t ctl" style="left:518.5px;top:414px;height:16px;line-height:16px;font-size:12px"><span class="c">亚冠精英</span></div>
<div class="cb" style="left:567px;top:417px"><svg width="11" height="11" style="position:absolute;left:-1px;top:-1px"><path d="M2.9 5.9 L4.8 8.3 L9 3.3" stroke="#3a3a3a" stroke-width="2.2" stroke-linecap="round" stroke-linejoin="round" fill="none"/></svg></div>
<div class="t ctl" style="left:579.5px;top:414px;height:16px;line-height:16px;font-size:12px"><span class="c">中超杯</span></div>
<div class="cb" style="left:616px;top:417px"><svg width="11" height="11" style="position:absolute;left:-1px;top:-1px"><path d="M2.9 5.9 L4.8 8.3 L9 3.3" stroke="#3a3a3a" stroke-width="2.2" stroke-linecap="round" stroke-linejoin="round" fill="none"/></svg></div>
<div class="t ctl" style="left:628px;top:414px;height:16px;line-height:16px;font-size:12px"><span class="c">球会友谊</span></div>
<div style="left:0px;top:432px;width:908px;height:1px;background:#c2c2c2;"></div>
<div style="left:0px;top:433px;width:908px;height:40px;background:#dce3ec;"></div>
<div style="left:452px;top:455px;width:456px;height:1px;background:#c2c2c2;"></div>
<div style="left:0px;top:473px;width:908px;height:1px;background:#c2c2c2;"></div>
<div style="left:52px;top:432px;width:1px;height:41px;background:#c2c2c2;"></div>
<div style="left:125px;top:432px;width:1px;height:41px;background:#c2c2c2;"></div>
<div style="left:245px;top:432px;width:1px;height:41px;background:#c2c2c2;"></div>
<div style="left:330px;top:432px;width:1px;height:41px;background:#c2c2c2;"></div>
<div style="left:366px;top:432px;width:1px;height:41px;background:#c2c2c2;"></div>
<div style="left:452px;top:432px;width:1px;height:41px;background:#c2c2c2;"></div>
<div style="left:490px;top:455px;width:1px;height:18px;background:#c2c2c2;"></div>
<div style="left:560px;top:455px;width:1px;height:18px;background:#c2c2c2;"></div>
<div style="left:598px;top:432px;width:1px;height:41px;background:#c2c2c2;"></div>
<div style="left:658px;top:455px;width:1px;height:18px;background:#c2c2c2;"></div>
<div style="left:718px;top:455px;width:1px;height:18px;background:#c2c2c2;"></div>
<div style="left:779px;top:432px;width:1px;height:41px;background:#c2c2c2;"></div>
<div style="left:816px;top:455px;width:1px;height:18px;background:#c2c2c2;"></div>
<div style="left:853px;top:455px;width:1px;height:18px;background:#c2c2c2;"></div>
<div class="t" style="left:0px;top:433px;width:52px;height:40px;line-height:40px;text-align:center;color:#333;"><span class="c">类型</span></div>
<div class="t" style="left:53px;top:433px;width:72px;height:40px;line-height:40px;text-align:center;color:#333;"><span class="c">日期</span></div>
<div class="t" style="left:126px;top:433px;width:119px;height:40px;line-height:40px;text-align:center;color:#333;"><span class="c">主场</span></div>
<div class="t" style="left:246px;top:433px;width:84px;height:40px;line-height:40px;text-align:center;color:#333;"><span class="c">比分</span><span class="a">(</span><span class="c">半场</span><span class="a">)</span></div>
<div class="t" style="left:331px;top:433px;width:35px;height:40px;line-height:40px;text-align:center;color:#333;"><span class="c">角球</span></div>
<div class="t" style="left:367px;top:433px;width:85px;height:40px;line-height:40px;text-align:center;color:#333;"><span class="c">客场</span></div>
<div class="t" style="left:453px;top:457px;width:37px;height:17px;line-height:17px;text-align:center;color:#333;"><span class="c">主</span></div>
<div class="t" style="left:491px;top:457px;width:69px;height:17px;line-height:17px;text-align:center;color:#333;"><span class="c">盘口</span></div>
<div class="t" style="left:561px;top:457px;width:37px;height:17px;line-height:17px;text-align:center;color:#333;"><span class="c">客</span></div>
<div class="t" style="left:599px;top:457px;width:59px;height:17px;line-height:17px;text-align:center;color:#333;"><span class="c">主</span></div>
<div class="t" style="left:659px;top:457px;width:59px;height:17px;line-height:17px;text-align:center;color:#333;"><span class="c">和</span></div>
<div class="t" style="left:719px;top:457px;width:60px;height:17px;line-height:17px;text-align:center;color:#333;"><span class="c">客</span></div>
<div class="t" style="left:780px;top:457px;width:36px;height:17px;line-height:17px;text-align:center;color:#333;"><span class="c">胜负</span></div>
<div class="t" style="left:817px;top:457px;width:36px;height:17px;line-height:17px;text-align:center;color:#333;"><span class="c">让球</span></div>
<div class="t" style="left:854px;top:457px;width:54px;height:17px;line-height:17px;text-align:center;color:#333;"><span class="c">进球数</span></div>
<div style="left:0px;top:474px;width:52px;height:27px;background:#0066ff;"></div>
<div style="left:53px;top:474px;width:399px;height:27px;background:#fff;"></div>
<div style="left:453px;top:474px;width:145px;height:27px;background:#fdf9f6;"></div>
<div style="left:599px;top:474px;width:180px;height:27px;background:#f0f7fc;"></div>
<div style="left:780px;top:474px;width:128px;height:27px;background:#fff;"></div>
<div style="left:0px;top:501px;width:908px;height:1px;background:#c2c2c2;"></div>
<div style="left:52px;top:474px;width:1px;height:27px;background:#c2c2c2;"></div>
<div style="left:125px;top:474px;width:1px;height:27px;background:#c2c2c2;"></div>
<div style="left:245px;top:474px;width:1px;height:27px;background:#c2c2c2;"></div>
<div style="left:330px;top:474px;width:1px;height:27px;background:#c2c2c2;"></div>
<div style="left:366px;top:474px;width:1px;height:27px;background:#c2c2c2;"></div>
<div style="left:452px;top:474px;width:1px;height:27px;background:#c2c2c2;"></div>
<div style="left:490px;top:474px;width:1px;height:27px;background:#c2c2c2;"></div>
<div style="left:560px;top:474px;width:1px;height:27px;background:#c2c2c2;"></div>
<div style="left:598px;top:474px;width:1px;height:27px;background:#c2c2c2;"></div>
<div style="left:658px;top:474px;width:1px;height:27px;background:#c2c2c2;"></div>
<div style="left:718px;top:474px;width:1px;height:27px;background:#c2c2c2;"></div>
<div style="left:779px;top:474px;width:1px;height:27px;background:#c2c2c2;"></div>
<div style="left:816px;top:474px;width:1px;height:27px;background:#c2c2c2;"></div>
<div style="left:853px;top:474px;width:1px;height:27px;background:#c2c2c2;"></div>
<div class="t d" style="left:-1px;top:474px;width:52px;height:27px;line-height:27px;text-align:center;color:#fff;"><span class="c">中超</span></div>
<div class="t d k" style="left:53px;top:474px;width:72px;height:27px;line-height:27px;text-align:center;color:#000;"><span class="a">25-07-26</span></div>
<div class="t d" style="left:125px;top:474px;width:119px;height:27px;line-height:27px;text-align:center;color:#007000;"><span class="c">上海海港</span></div>
<div class="t d k sc" style="left:246px;top:474px;width:84px;height:27px;line-height:27px;text-align:center;color:#000;"><span style="color:#f00"><span class="a">2-2</span></span><span class="a">(1-0)</span></div>
<div class="t d k" style="left:331px;top:474px;width:35px;height:27px;line-height:27px;text-align:center;color:#000;"><span class="a">6-2</span></div>
<div class="t d k" style="left:366px;top:474px;width:85px;height:27px;line-height:27px;text-align:center;color:#000;"><span class="c">青岛西海岸</span></div>
<div class="t d k" style="left:453px;top:474px;width:37px;height:27px;line-height:27px;text-align:center;color:#000;"><span class="a">0.94</span></div>
<div class="t d k" style="left:490px;top:474px;width:69px;height:27px;line-height:27px;text-align:center;color:#000;"><span class="c">球半</span></div>
<div class="t d k" style="left:561px;top:474px;width:37px;height:27px;line-height:27px;text-align:center;color:#000;"><span class="a">0.92</span></div>
<div class="t d k" style="left:599px;top:474px;width:59px;height:27px;line-height:27px;text-align:center;color:#000;"><span class="a">1.35</span></div>
<div class="t d k" style="left:659px;top:474px;width:59px;height:27px;line-height:27px;text-align:center;color:#000;"><span class="a">5.02</span></div>
<div class="t d k" style="left:719px;top:474px;width:60px;height:27px;line-height:27px;text-align:center;color:#000;"><span class="a">6.99</span></div>
<div class="t d" style="left:779px;top:474px;width:36px;height:27px;line-height:27px;text-align:center;color:#00f;"><span class="c">平</span></div>
<div class="t d" style="left:816px;top:474px;width:36px;height:27px;line-height:27px;text-align:center;color:#007000;"><span class="c">输</span></div>
<div class="t d" style="left:853px;top:474px;width:54px;height:27px;line-height:27px;text-align:center;color:#f00;"><span class="c">大</span></div>
<div style="left:0px;top:502px;width:52px;height:27px;background:#0066ff;"></div>
<div style="left:53px;top:502px;width:399px;height:27px;background:#efefef;"></div>
<div style="left:453px;top:502px;width:145px;height:27px;background:#fdf9f6;"></div>
<div style="left:599px;top:502px;width:180px;height:27px;background:#f0f7fc;"></div>
<div style="left:780px;top:502px;width:128px;height:27px;background:#efefef;"></div>
<div style="left:0px;top:529px;width:908px;height:1px;background:#c2c2c2;"></div>
<div style="left:52px;top:502px;width:1px;height:27px;background:#c2c2c2;"></div>
<div style="left:125px;top:502px;width:1px;height:27px;background:#c2c2c2;"></div>
<div style="left:245px;top:502px;width:1px;height:27px;background:#c2c2c2;"></div>
<div style="left:330px;top:502px;width:1px;height:27px;background:#c2c2c2;"></div>
<div style="left:366px;top:502px;width:1px;height:27px;background:#c2c2c2;"></div>
<div style="left:452px;top:502px;width:1px;height:27px;background:#c2c2c2;"></div>
<div style="left:490px;top:502px;width:1px;height:27px;background:#c2c2c2;"></div>
<div style="left:560px;top:502px;width:1px;height:27px;background:#c2c2c2;"></div>
<div style="left:598px;top:502px;width:1px;height:27px;background:#c2c2c2;"></div>
<div style="left:658px;top:502px;width:1px;height:27px;background:#c2c2c2;"></div>
<div style="left:718px;top:502px;width:1px;height:27px;background:#c2c2c2;"></div>
<div style="left:779px;top:502px;width:1px;height:27px;background:#c2c2c2;"></div>
<div style="left:816px;top:502px;width:1px;height:27px;background:#c2c2c2;"></div>
<div style="left:853px;top:502px;width:1px;height:27px;background:#c2c2c2;"></div>
<div class="t d" style="left:-1px;top:502px;width:52px;height:27px;line-height:27px;text-align:center;color:#fff;"><span class="c">中超</span></div>
<div class="t d k" style="left:53px;top:502px;width:72px;height:27px;line-height:27px;text-align:center;color:#000;"><span class="a">25-07-18</span></div>
<div class="t d k" style="left:125px;top:502px;width:119px;height:27px;line-height:27px;text-align:center;color:#000;"><span class="c">长春亚泰</span></div>
<div class="t d k sc" style="left:246px;top:502px;width:84px;height:27px;line-height:27px;text-align:center;color:#000;"><span style="color:#f00"><span class="a">1-3</span></span><span class="a">(0-1)</span></div>
<div class="t d k" style="left:331px;top:502px;width:35px;height:27px;line-height:27px;text-align:center;color:#000;"><span class="a">3-3</span></div>
<div class="t d" style="left:366px;top:502px;width:85px;height:27px;line-height:27px;text-align:center;color:#007000;"><span class="c">上海海港</span></div>
<div class="t d k" style="left:453px;top:502px;width:37px;height:27px;line-height:27px;text-align:center;color:#000;"><span class="a">1.02</span></div>
<div class="t d k" style="left:490.5px;top:502px;width:69px;height:27px;line-height:27px;text-align:center;color:#000;"><span class="st"><span class="a">*</span></span><span class="c">一</span><span class="a sl">/</span><span class="c">球半</span></div>
<div class="t d k" style="left:561px;top:502px;width:37px;height:27px;line-height:27px;text-align:center;color:#000;"><span class="a">0.84</span></div>
<div class="t d k" style="left:599px;top:502px;width:59px;height:27px;line-height:27px;text-align:center;color:#000;"><span class="a">6.09</span></div>
<div class="t d k" style="left:659px;top:502px;width:59px;height:27px;line-height:27px;text-align:center;color:#000;"><span class="a">4.78</span></div>
<div class="t d k" style="left:719px;top:502px;width:60px;height:27px;line-height:27px;text-align:center;color:#000;"><span class="a">1.41</span></div>
<div class="t d" style="left:779px;top:502px;width:36px;height:27px;line-height:27px;text-align:center;color:#f00;"><span class="c">胜</span></div>
<div class="t d" style="left:816px;top:502px;width:36px;height:27px;line-height:27px;text-align:center;color:#f00;"><span class="c">赢</span></div>
<div class="t d" style="left:853px;top:502px;width:54px;height:27px;line-height:27px;text-align:center;color:#f00;"><span class="c">大</span></div>
<div style="left:0px;top:530px;width:52px;height:27px;background:#0066ff;"></div>
<div style="left:53px;top:530px;width:399px;height:27px;background:#fff;"></div>
<div style="left:453px;top:530px;width:145px;height:27px;background:#fdf9f6;"></div>
<div style="left:599px;top:530px;width:180px;height:27px;background:#f0f7fc;"></div>
<div style="left:780px;top:530px;width:128px;height:27px;background:#fff;"></div>
<div style="left:0px;top:557px;width:908px;height:1px;background:#c2c2c2;"></div>
<div style="left:52px;top:530px;width:1px;height:27px;background:#c2c2c2;"></div>
<div style="left:125px;top:530px;width:1px;height:27px;background:#c2c2c2;"></div>
<div style="left:245px;top:530px;width:1px;height:27px;background:#c2c2c2;"></div>
<div style="left:330px;top:530px;width:1px;height:27px;background:#c2c2c2;"></div>
<div style="left:366px;top:530px;width:1px;height:27px;background:#c2c2c2;"></div>
<div style="left:452px;top:530px;width:1px;height:27px;background:#c2c2c2;"></div>
<div style="left:490px;top:530px;width:1px;height:27px;background:#c2c2c2;"></div>
<div style="left:560px;top:530px;width:1px;height:27px;background:#c2c2c2;"></div>
<div style="left:598px;top:530px;width:1px;height:27px;background:#c2c2c2;"></div>
<div style="left:658px;top:530px;width:1px;height:27px;background:#c2c2c2;"></div>
<div style="left:718px;top:530px;width:1px;height:27px;background:#c2c2c2;"></div>
<div style="left:779px;top:530px;width:1px;height:27px;background:#c2c2c2;"></div>
<div style="left:816px;top:530px;width:1px;height:27px;background:#c2c2c2;"></div>
<div style="left:853px;top:530px;width:1px;height:27px;background:#c2c2c2;"></div>
<div class="t d" style="left:-1px;top:530px;width:52px;height:27px;line-height:27px;text-align:center;color:#fff;"><span class="c">中超</span></div>
<div class="t d k" style="left:53px;top:530px;width:72px;height:27px;line-height:27px;text-align:center;color:#000;"><span class="a">25-06-30</span></div>
<div class="t d k" style="left:125px;top:530px;width:119px;height:27px;line-height:27px;text-align:center;color:#000;"><span class="c">深圳新鹏城</span></div>
<div class="t d k sc" style="left:246px;top:530px;width:84px;height:27px;line-height:27px;text-align:center;color:#000;"><span style="color:#f00"><span class="a">1-2</span></span><span class="a">(1-0)</span></div>
<div class="t d k" style="left:331px;top:530px;width:35px;height:27px;line-height:27px;text-align:center;color:#000;"><span class="a">2-7</span></div>
<div class="t d" style="left:366px;top:530px;width:85px;height:27px;line-height:27px;text-align:center;color:#007000;"><span class="c">上海海港</span></div>
<div class="t d k" style="left:453px;top:530px;width:37px;height:27px;line-height:27px;text-align:center;color:#000;"><span class="a">0.89</span></div>
<div class="t d k" style="left:490.5px;top:530px;width:69px;height:27px;line-height:27px;text-align:center;color:#000;"><span class="st"><span class="a">*</span></span><span class="c">一球</span></div>
<div class="t d k" style="left:561px;top:530px;width:37px;height:27px;line-height:27px;text-align:center;color:#000;"><span class="a">0.97</span></div>
<div class="t d k" style="left:599px;top:530px;width:59px;height:27px;line-height:27px;text-align:center;color:#000;"><span class="a">4.84</span></div>
<div class="t d k" style="left:659px;top:530px;width:59px;height:27px;line-height:27px;text-align:center;color:#000;"><span class="a">4.36</span></div>
<div class="t d k" style="left:719px;top:530px;width:60px;height:27px;line-height:27px;text-align:center;color:#000;"><span class="a">1.55</span></div>
<div class="t d" style="left:779px;top:530px;width:36px;height:27px;line-height:27px;text-align:center;color:#f00;"><span class="c">胜</span></div>
<div class="t d" style="left:816px;top:530px;width:36px;height:27px;line-height:27px;text-align:center;color:#00f;"><span class="c">走</span></div>
<div class="t d" style="left:853px;top:530px;width:54px;height:27px;line-height:27px;text-align:center;color:#00f;"><span class="c">走</span></div>
<div style="left:0px;top:558px;width:52px;height:27px;background:#0066ff;"></div>
<div style="left:53px;top:558px;width:399px;height:27px;background:#efefef;"></div>
<div style="left:453px;top:558px;width:145px;height:27px;background:#fdf9f6;"></div>
<div style="left:599px;top:558px;width:180px;height:27px;background:#f0f7fc;"></div>
<div style="left:780px;top:558px;width:128px;height:27px;background:#efefef;"></div>
<div style="left:0px;top:585px;width:908px;height:1px;background:#c2c2c2;"></div>
<div style="left:52px;top:558px;width:1px;height:27px;background:#c2c2c2;"></div>
<div style="left:125px;top:558px;width:1px;height:27px;background:#c2c2c2;"></div>
<div style="left:245px;top:558px;width:1px;height:27px;background:#c2c2c2;"></div>
<div style="left:330px;top:558px;width:1px;height:27px;background:#c2c2c2;"></div>
<div style="left:366px;top:558px;width:1px;height:27px;background:#c2c2c2;"></div>
<div style="left:452px;top:558px;width:1px;height:27px;background:#c2c2c2;"></div>
<div style="left:490px;top:558px;width:1px;height:27px;background:#c2c2c2;"></div>
<div style="left:560px;top:558px;width:1px;height:27px;background:#c2c2c2;"></div>
<div style="left:598px;top:558px;width:1px;height:27px;background:#c2c2c2;"></div>
<div style="left:658px;top:558px;width:1px;height:27px;background:#c2c2c2;"></div>
<div style="left:718px;top:558px;width:1px;height:27px;background:#c2c2c2;"></div>
<div style="left:779px;top:558px;width:1px;height:27px;background:#c2c2c2;"></div>
<div style="left:816px;top:558px;width:1px;height:27px;background:#c2c2c2;"></div>
<div style="left:853px;top:558px;width:1px;height:27px;background:#c2c2c2;"></div>
<div class="t d" style="left:-1px;top:558px;width:52px;height:27px;line-height:27px;text-align:center;color:#fff;"><span class="c">中超</span></div>
<div class="t d k" style="left:53px;top:558px;width:72px;height:27px;line-height:27px;text-align:center;color:#000;"><span class="a">25-06-26</span></div>
<div class="t d" style="left:125px;top:558px;width:119px;height:27px;line-height:27px;text-align:center;color:#007000;"><span class="c">上海海港</span></div>
<div class="t d k sc" style="left:246px;top:558px;width:84px;height:27px;line-height:27px;text-align:center;color:#000;"><span style="color:#f00"><span class="a">3-0</span></span><span class="a">(2-0)</span></div>
<div class="t d k" style="left:331px;top:558px;width:35px;height:27px;line-height:27px;text-align:center;color:#000;"><span class="a">7-3</span></div>
<div class="t d k" style="left:366px;top:558px;width:85px;height:27px;line-height:27px;text-align:center;color:#000;"><span class="c">大连英博</span></div>
<div class="t d k" style="left:453px;top:558px;width:37px;height:27px;line-height:27px;text-align:center;color:#000;"><span class="a">0.96</span></div>
<div class="t d k" style="left:490.5px;top:558px;width:69px;height:27px;line-height:27px;text-align:center;color:#000;"><span class="c">一</span><span class="a sl">/</span><span class="c">球半</span></div>
<div class="t d k" style="left:561px;top:558px;width:37px;height:27px;line-height:27px;text-align:center;color:#000;"><span class="a">0.90</span></div>
<div class="t d k" style="left:599px;top:558px;width:59px;height:27px;line-height:27px;text-align:center;color:#000;"><span class="a">1.41</span></div>
<div class="t d k" style="left:659px;top:558px;width:59px;height:27px;line-height:27px;text-align:center;color:#000;"><span class="a">4.75</span></div>
<div class="t d k" style="left:719px;top:558px;width:60px;height:27px;line-height:27px;text-align:center;color:#000;"><span class="a">6.17</span></div>
<div class="t d" style="left:779px;top:558px;width:36px;height:27px;line-height:27px;text-align:center;color:#f00;"><span class="c">胜</span></div>
<div class="t d" style="left:816px;top:558px;width:36px;height:27px;line-height:27px;text-align:center;color:#f00;"><span class="c">赢</span></div>
<div class="t d" style="left:853px;top:558px;width:54px;height:27px;line-height:27px;text-align:center;color:#00f;"><span class="c">走</span></div>
<div style="left:0px;top:586px;width:52px;height:27px;background:#6699ff;"></div>
<div style="left:53px;top:586px;width:399px;height:27px;background:#fff;"></div>
<div style="left:453px;top:586px;width:145px;height:27px;background:#fdf9f6;"></div>
<div style="left:599px;top:586px;width:180px;height:27px;background:#f0f7fc;"></div>
<div style="left:780px;top:586px;width:128px;height:27px;background:#fff;"></div>
<div style="left:0px;top:613px;width:908px;height:1px;background:#c2c2c2;"></div>
<div style="left:52px;top:586px;width:1px;height:27px;background:#c2c2c2;"></div>
<div style="left:125px;top:586px;width:1px;height:27px;background:#c2c2c2;"></div>
<div style="left:245px;top:586px;width:1px;height:27px;background:#c2c2c2;"></div>
<div style="left:330px;top:586px;width:1px;height:27px;background:#c2c2c2;"></div>
<div style="left:366px;top:586px;width:1px;height:27px;background:#c2c2c2;"></div>
<div style="left:452px;top:586px;width:1px;height:27px;background:#c2c2c2;"></div>
<div style="left:490px;top:586px;width:1px;height:27px;background:#c2c2c2;"></div>
<div style="left:560px;top:586px;width:1px;height:27px;background:#c2c2c2;"></div>
<div style="left:598px;top:586px;width:1px;height:27px;background:#c2c2c2;"></div>
<div style="left:658px;top:586px;width:1px;height:27px;background:#c2c2c2;"></div>
<div style="left:718px;top:586px;width:1px;height:27px;background:#c2c2c2;"></div>
<div style="left:779px;top:586px;width:1px;height:27px;background:#c2c2c2;"></div>
<div style="left:816px;top:586px;width:1px;height:27px;background:#c2c2c2;"></div>
<div style="left:853px;top:586px;width:1px;height:27px;background:#c2c2c2;"></div>
<div class="t d" style="left:-1px;top:586px;width:52px;height:27px;line-height:27px;text-align:center;color:#fff;"><span class="c">中协杯</span></div>
<div class="t d k" style="left:53px;top:586px;width:72px;height:27px;line-height:27px;text-align:center;color:#000;"><span class="a">25-06-22</span></div>
<div class="t d" style="left:125px;top:586px;width:119px;height:27px;line-height:27px;text-align:center;color:#007000;"><span class="c">上海海港</span></div>
<div class="t d k sc" style="left:246px;top:586px;width:84px;height:27px;line-height:27px;text-align:center;color:#000;"><span style="color:#f00"><span class="a">2-3</span></span><span class="a">(0-1)</span></div>
<div class="t d k" style="left:331px;top:586px;width:35px;height:27px;line-height:27px;text-align:center;color:#000;"><span class="a">4-4</span></div>
<div class="t d k" style="left:366px;top:586px;width:85px;height:27px;line-height:27px;text-align:center;color:#000;"><span class="c">上海申花</span></div>
<div class="t d k" style="left:453px;top:586px;width:37px;height:27px;line-height:27px;text-align:center;color:#000;"><span class="a">0.86</span></div>
<div class="t d k" style="left:490px;top:586px;width:69px;height:27px;line-height:27px;text-align:center;color:#000;"><span class="c">平手</span></div>
<div class="t d k" style="left:561px;top:586px;width:37px;height:27px;line-height:27px;text-align:center;color:#000;"><span class="a">0.96</span></div>
<div class="t d k" style="left:599px;top:586px;width:59px;height:27px;line-height:27px;text-align:center;color:#000;"><span class="a">2.46</span></div>
<div class="t d k" style="left:659px;top:586px;width:59px;height:27px;line-height:27px;text-align:center;color:#000;"><span class="a">3.67</span></div>
<div class="t d k" style="left:719px;top:586px;width:60px;height:27px;line-height:27px;text-align:center;color:#000;"><span class="a">2.41</span></div>
<div class="t d" style="left:779px;top:586px;width:36px;height:27px;line-height:27px;text-align:center;color:#007000;"><span class="c">负</span></div>
<div class="t d" style="left:816px;top:586px;width:36px;height:27px;line-height:27px;text-align:center;color:#007000;"><span class="c">输</span></div>
<div class="t d" style="left:853px;top:586px;width:54px;height:27px;line-height:27px;text-align:center;color:#f00;"><span class="c">大</span></div>
<div style="left:0px;top:614px;width:52px;height:27px;background:#0066ff;"></div>
<div style="left:53px;top:614px;width:399px;height:27px;background:#efefef;"></div>
<div style="left:453px;top:614px;width:145px;height:27px;background:#fdf9f6;"></div>
<div style="left:599px;top:614px;width:180px;height:27px;background:#f0f7fc;"></div>
<div style="left:780px;top:614px;width:128px;height:27px;background:#efefef;"></div>
<div style="left:0px;top:641px;width:908px;height:1px;background:#c2c2c2;"></div>
<div style="left:52px;top:614px;width:1px;height:27px;background:#c2c2c2;"></div>
<div style="left:125px;top:614px;width:1px;height:27px;background:#c2c2c2;"></div>
<div style="left:245px;top:614px;width:1px;height:27px;background:#c2c2c2;"></div>
<div style="left:330px;top:614px;width:1px;height:27px;background:#c2c2c2;"></div>
<div style="left:366px;top:614px;width:1px;height:27px;background:#c2c2c2;"></div>
<div style="left:452px;top:614px;width:1px;height:27px;background:#c2c2c2;"></div>
<div style="left:490px;top:614px;width:1px;height:27px;background:#c2c2c2;"></div>
<div style="left:560px;top:614px;width:1px;height:27px;background:#c2c2c2;"></div>
<div style="left:598px;top:614px;width:1px;height:27px;background:#c2c2c2;"></div>
<div style="left:658px;top:614px;width:1px;height:27px;background:#c2c2c2;"></div>
<div style="left:718px;top:614px;width:1px;height:27px;background:#c2c2c2;"></div>
<div style="left:779px;top:614px;width:1px;height:27px;background:#c2c2c2;"></div>
<div style="left:816px;top:614px;width:1px;height:27px;background:#c2c2c2;"></div>
<div style="left:853px;top:614px;width:1px;height:27px;background:#c2c2c2;"></div>
<div class="t d" style="left:-1px;top:614px;width:52px;height:27px;line-height:27px;text-align:center;color:#fff;"><span class="c">中超</span></div>
<div class="t d k" style="left:53px;top:614px;width:72px;height:27px;line-height:27px;text-align:center;color:#000;"><span class="a">25-06-18</span></div>
<div class="t d k" style="left:125px;top:614px;width:119px;height:27px;line-height:27px;text-align:center;color:#000;"><span class="c">河南队</span></div>
<div class="t d k sc" style="left:246px;top:614px;width:84px;height:27px;line-height:27px;text-align:center;color:#000;"><span style="color:#f00"><span class="a">1-3</span></span><span class="a">(0-3)</span></div>
<div class="t d k" style="left:331px;top:614px;width:35px;height:27px;line-height:27px;text-align:center;color:#000;"><span class="a">6-4</span></div>
<div class="t d" style="left:366px;top:614px;width:85px;height:27px;line-height:27px;text-align:center;color:#007000;"><span class="c">上海海港</span><span class="rc"><span class="a">1</span></span></div>
<div class="t d k" style="left:453px;top:614px;width:37px;height:27px;line-height:27px;text-align:center;color:#000;"><span class="a">1.12</span></div>
<div class="t d k" style="left:490px;top:614px;width:69px;height:27px;line-height:27px;text-align:center;color:#000;"><span class="c">平手</span></div>
<div class="t d k" style="left:561px;top:614px;width:37px;height:27px;line-height:27px;text-align:center;color:#000;"><span class="a">0.75</span></div>
<div class="t d k" style="left:599px;top:614px;width:59px;height:27px;line-height:27px;text-align:center;color:#000;"><span class="a">2.62</span></div>
<div class="t d k" style="left:659px;top:614px;width:59px;height:27px;line-height:27px;text-align:center;color:#000;"><span class="a">3.85</span></div>
<div class="t d k" style="left:719px;top:614px;width:60px;height:27px;line-height:27px;text-align:center;color:#000;"><span class="a">2.27</span></div>
<div class="t d" style="left:779px;top:614px;width:36px;height:27px;line-height:27px;text-align:center;color:#f00;"><span class="c">胜</span></div>
<div class="t d" style="left:816px;top:614px;width:36px;height:27px;line-height:27px;text-align:center;color:#f00;"><span class="c">赢</span></div>
<div class="t d" style="left:853px;top:614px;width:54px;height:27px;line-height:27px;text-align:center;color:#f00;"><span class="c">大</span></div>
<div style="left:0px;top:642px;width:52px;height:27px;background:#0066ff;"></div>
<div style="left:53px;top:642px;width:399px;height:27px;background:#fff;"></div>
<div style="left:453px;top:642px;width:145px;height:27px;background:#fdf9f6;"></div>
<div style="left:599px;top:642px;width:180px;height:27px;background:#f0f7fc;"></div>
<div style="left:780px;top:642px;width:128px;height:27px;background:#fff;"></div>
<div style="left:0px;top:669px;width:908px;height:1px;background:#c2c2c2;"></div>
<div style="left:52px;top:642px;width:1px;height:27px;background:#c2c2c2;"></div>
<div style="left:125px;top:642px;width:1px;height:27px;background:#c2c2c2;"></div>
<div style="left:245px;top:642px;width:1px;height:27px;background:#c2c2c2;"></div>
<div style="left:330px;top:642px;width:1px;height:27px;background:#c2c2c2;"></div>
<div style="left:366px;top:642px;width:1px;height:27px;background:#c2c2c2;"></div>
<div style="left:452px;top:642px;width:1px;height:27px;background:#c2c2c2;"></div>
<div style="left:490px;top:642px;width:1px;height:27px;background:#c2c2c2;"></div>
<div style="left:560px;top:642px;width:1px;height:27px;background:#c2c2c2;"></div>
<div style="left:598px;top:642px;width:1px;height:27px;background:#c2c2c2;"></div>
<div style="left:658px;top:642px;width:1px;height:27px;background:#c2c2c2;"></div>
<div style="left:718px;top:642px;width:1px;height:27px;background:#c2c2c2;"></div>
<div style="left:779px;top:642px;width:1px;height:27px;background:#c2c2c2;"></div>
<div style="left:816px;top:642px;width:1px;height:27px;background:#c2c2c2;"></div>
<div style="left:853px;top:642px;width:1px;height:27px;background:#c2c2c2;"></div>
<div class="t d" style="left:-1px;top:642px;width:52px;height:27px;line-height:27px;text-align:center;color:#fff;"><span class="c">中超</span></div>
<div class="t d k" style="left:53px;top:642px;width:72px;height:27px;line-height:27px;text-align:center;color:#000;"><span class="a">25-06-14</span></div>
<div class="t d k" style="left:125px;top:642px;width:119px;height:27px;line-height:27px;text-align:center;color:#000;"><span class="c">浙江俱乐部绿城</span></div>
<div class="t d k sc" style="left:246px;top:642px;width:84px;height:27px;line-height:27px;text-align:center;color:#000;"><span style="color:#f00"><span class="a">2-2</span></span><span class="a">(0-1)</span></div>
<div class="t d k" style="left:331px;top:642px;width:35px;height:27px;line-height:27px;text-align:center;color:#000;"><span class="a">5-5</span></div>
<div class="t d" style="left:366px;top:642px;width:85px;height:27px;line-height:27px;text-align:center;color:#007000;"><span class="c">上海海港</span></div>
<div class="t d k" style="left:453px;top:642px;width:37px;height:27px;line-height:27px;text-align:center;color:#000;"><span class="a">0.80</span></div>
<div class="t d k" style="left:490.5px;top:642px;width:69px;height:27px;line-height:27px;text-align:center;color:#000;"><span class="st"><span class="a">*</span></span><span class="c">半球</span></div>
<div class="t d k" style="left:561px;top:642px;width:37px;height:27px;line-height:27px;text-align:center;color:#000;"><span class="a">1.06</span></div>
<div class="t d k" style="left:599px;top:642px;width:59px;height:27px;line-height:27px;text-align:center;color:#000;"><span class="a">3.21</span></div>
<div class="t d k" style="left:659px;top:642px;width:59px;height:27px;line-height:27px;text-align:center;color:#000;"><span class="a">3.88</span></div>
<div class="t d k" style="left:719px;top:642px;width:60px;height:27px;line-height:27px;text-align:center;color:#000;"><span class="a">1.95</span></div>
<div class="t d" style="left:779px;top:642px;width:36px;height:27px;line-height:27px;text-align:center;color:#00f;"><span class="c">平</span></div>
<div class="t d" style="left:816px;top:642px;width:36px;height:27px;line-height:27px;text-align:center;color:#007000;"><span class="c">输</span></div>
<div class="t d" style="left:853px;top:642px;width:54px;height:27px;line-height:27px;text-align:center;color:#f00;"><span class="c">大</span></div>
<div style="left:0px;top:670px;width:52px;height:27px;background:#6699ff;"></div>
<div style="left:53px;top:670px;width:399px;height:27px;background:#efefef;"></div>
<div style="left:453px;top:670px;width:145px;height:27px;background:#fdf9f6;"></div>
<div style="left:599px;top:670px;width:180px;height:27px;background:#f0f7fc;"></div>
<div style="left:780px;top:670px;width:128px;height:27px;background:#efefef;"></div>
<div style="left:0px;top:697px;width:908px;height:1px;background:#c2c2c2;"></div>
<div style="left:52px;top:670px;width:1px;height:27px;background:#c2c2c2;"></div>
<div style="left:125px;top:670px;width:1px;height:27px;background:#c2c2c2;"></div>
<div style="left:245px;top:670px;width:1px;height:27px;background:#c2c2c2;"></div>
<div style="left:330px;top:670px;width:1px;height:27px;background:#c2c2c2;"></div>
<div style="left:366px;top:670px;width:1px;height:27px;background:#c2c2c2;"></div>
<div style="left:452px;top:670px;width:1px;height:27px;background:#c2c2c2;"></div>
<div style="left:490px;top:670px;width:1px;height:27px;background:#c2c2c2;"></div>
<div style="left:560px;top:670px;width:1px;height:27px;background:#c2c2c2;"></div>
<div style="left:598px;top:670px;width:1px;height:27px;background:#c2c2c2;"></div>
<div style="left:658px;top:670px;width:1px;height:27px;background:#c2c2c2;"></div>
<div style="left:718px;top:670px;width:1px;height:27px;background:#c2c2c2;"></div>
<div style="left:779px;top:670px;width:1px;height:27px;background:#c2c2c2;"></div>
<div style="left:816px;top:670px;width:1px;height:27px;background:#c2c2c2;"></div>
<div style="left:853px;top:670px;width:1px;height:27px;background:#c2c2c2;"></div>
<div class="t d" style="left:-1px;top:670px;width:52px;height:27px;line-height:27px;text-align:center;color:#fff;"><span class="c">中协杯</span></div>
<div class="t d k" style="left:53px;top:670px;width:72px;height:27px;line-height:27px;text-align:center;color:#000;"><span class="a">25-05-21</span></div>
<div class="t d k" style="left:125px;top:670px;width:119px;height:27px;line-height:27px;text-align:center;color:#000;"><span class="c">苏州东吴</span></div>
<div class="t d k sc" style="left:246px;top:670px;width:84px;height:27px;line-height:27px;text-align:center;color:#000;"><span style="color:#f00"><span class="a">2-6</span></span><span class="a">(1-1)</span></div>
<div class="t d k" style="left:331px;top:670px;width:35px;height:27px;line-height:27px;text-align:center;color:#000;"><span class="a">7-5</span></div>
<div class="t d" style="left:366px;top:670px;width:85px;height:27px;line-height:27px;text-align:center;color:#007000;"><span class="c">上海海港</span></div>
<div class="t d k" style="left:453px;top:670px;width:37px;height:27px;line-height:27px;text-align:center;color:#000;"><span class="a">0.79</span></div>
<div class="t d k" style="left:490.5px;top:670px;width:69px;height:27px;line-height:27px;text-align:center;color:#000;"><span class="st"><span class="a">*</span></span><span class="c">球半</span><span class="a sl">/</span><span class="c">两</span></div>
<div class="t d k" style="left:561px;top:670px;width:37px;height:27px;line-height:27px;text-align:center;color:#000;"><span class="a">0.97</span></div>
<div class="t d k" style="left:599px;top:670px;width:59px;height:27px;line-height:27px;text-align:center;color:#000;"><span class="a">9.79</span></div>
<div class="t d k" style="left:659px;top:670px;width:59px;height:27px;line-height:27px;text-align:center;color:#000;"><span class="a">5.56</span></div>
<div class="t d k" style="left:719px;top:670px;width:60px;height:27px;line-height:27px;text-align:center;color:#000;"><span class="a">1.23</span></div>
<div class="t d" style="left:779px;top:670px;width:36px;height:27px;line-height:27px;text-align:center;color:#f00;"><span class="c">胜</span></div>
<div class="t d" style="left:816px;top:670px;width:36px;height:27px;line-height:27px;text-align:center;color:#f00;"><span class="c">赢</span></div>
<div class="t d" style="left:853px;top:670px;width:54px;height:27px;line-height:27px;text-align:center;color:#f00;"><span class="c">大</span></div>
<div style="left:0px;top:698px;width:52px;height:27px;background:#0066ff;"></div>
<div style="left:53px;top:698px;width:399px;height:27px;background:#fff;"></div>
<div style="left:453px;top:698px;width:145px;height:27px;background:#fdf9f6;"></div>
<div style="left:599px;top:698px;width:180px;height:27px;background:#f0f7fc;"></div>
<div style="left:780px;top:698px;width:128px;height:27px;background:#fff;"></div>
<div style="left:0px;top:725px;width:908px;height:1px;background:#c2c2c2;"></div>
<div style="left:52px;top:698px;width:1px;height:27px;background:#c2c2c2;"></div>
<div style="left:125px;top:698px;width:1px;height:27px;background:#c2c2c2;"></div>
<div style="left:245px;top:698px;width:1px;height:27px;background:#c2c2c2;"></div>
<div style="left:330px;top:698px;width:1px;height:27px;background:#c2c2c2;"></div>
<div style="left:366px;top:698px;width:1px;height:27px;background:#c2c2c2;"></div>
<div style="left:452px;top:698px;width:1px;height:27px;background:#c2c2c2;"></div>
<div style="left:490px;top:698px;width:1px;height:27px;background:#c2c2c2;"></div>
<div style="left:560px;top:698px;width:1px;height:27px;background:#c2c2c2;"></div>
<div style="left:598px;top:698px;width:1px;height:27px;background:#c2c2c2;"></div>
<div style="left:658px;top:698px;width:1px;height:27px;background:#c2c2c2;"></div>
<div style="left:718px;top:698px;width:1px;height:27px;background:#c2c2c2;"></div>
<div style="left:779px;top:698px;width:1px;height:27px;background:#c2c2c2;"></div>
<div style="left:816px;top:698px;width:1px;height:27px;background:#c2c2c2;"></div>
<div style="left:853px;top:698px;width:1px;height:27px;background:#c2c2c2;"></div>
<div class="t d" style="left:-1px;top:698px;width:52px;height:27px;line-height:27px;text-align:center;color:#fff;"><span class="c">中超</span></div>
<div class="t d k" style="left:53px;top:698px;width:72px;height:27px;line-height:27px;text-align:center;color:#000;"><span class="a">25-05-17</span></div>
<div class="t d" style="left:125px;top:698px;width:119px;height:27px;line-height:27px;text-align:center;color:#007000;"><span class="c">上海海港</span></div>
<div class="t d k sc" style="left:246px;top:698px;width:84px;height:27px;line-height:27px;text-align:center;color:#000;"><span style="color:#f00"><span class="a">1-1</span></span><span class="a">(0-0)</span></div>
<div class="t d k" style="left:331px;top:698px;width:35px;height:27px;line-height:27px;text-align:center;color:#000;"><span class="a">4-6</span></div>
<div class="t d k" style="left:366px;top:698px;width:85px;height:27px;line-height:27px;text-align:center;color:#000;"><span class="c">山东泰山</span></div>
<div class="t d k" style="left:453px;top:698px;width:37px;height:27px;line-height:27px;text-align:center;color:#000;"><span class="a">1.01</span></div>
<div class="t d k" style="left:490px;top:698px;width:69px;height:27px;line-height:27px;text-align:center;color:#000;"><span class="c">半球</span></div>
<div class="t d k" style="left:561px;top:698px;width:37px;height:27px;line-height:27px;text-align:center;color:#000;"><span class="a">0.85</span></div>
<div class="t d k" style="left:599px;top:698px;width:59px;height:27px;line-height:27px;text-align:center;color:#000;"><span class="a">1.87</span></div>
<div class="t d k" style="left:659px;top:698px;width:59px;height:27px;line-height:27px;text-align:center;color:#000;"><span class="a">4.31</span></div>
<div class="t d k" style="left:719px;top:698px;width:60px;height:27px;line-height:27px;text-align:center;color:#000;"><span class="a">3.16</span></div>
<div class="t d" style="left:779px;top:698px;width:36px;height:27px;line-height:27px;text-align:center;color:#00f;"><span class="c">平</span></div>
<div class="t d" style="left:816px;top:698px;width:36px;height:27px;line-height:27px;text-align:center;color:#007000;"><span class="c">输</span></div>
<div class="t d" style="left:853px;top:698px;width:54px;height:27px;line-height:27px;text-align:center;color:#007000;"><span class="c">小</span></div>
<div style="left:0px;top:726px;width:52px;height:27px;background:#0066ff;"></div>
<div style="left:53px;top:726px;width:399px;height:27px;background:#efefef;"></div>
<div style="left:453px;top:726px;width:145px;height:27px;background:#fdf9f6;"></div>
<div style="left:599px;top:726px;width:180px;height:27px;background:#f0f7fc;"></div>
<div style="left:780px;top:726px;width:128px;height:27px;background:#efefef;"></div>
<div style="left:0px;top:753px;width:908px;height:1px;background:#c2c2c2;"></div>
<div style="left:52px;top:726px;width:1px;height:27px;background:#c2c2c2;"></div>
<div style="left:125px;top:726px;width:1px;height:27px;background:#c2c2c2;"></div>
<div style="left:245px;top:726px;width:1px;height:27px;background:#c2c2c2;"></div>
<div style="left:330px;top:726px;width:1px;height:27px;background:#c2c2c2;"></div>
<div style="left:366px;top:726px;width:1px;height:27px;background:#c2c2c2;"></div>
<div style="left:452px;top:726px;width:1px;height:27px;background:#c2c2c2;"></div>
<div style="left:490px;top:726px;width:1px;height:27px;background:#c2c2c2;"></div>
<div style="left:560px;top:726px;width:1px;height:27px;background:#c2c2c2;"></div>
<div style="left:598px;top:726px;width:1px;height:27px;background:#c2c2c2;"></div>
<div style="left:658px;top:726px;width:1px;height:27px;background:#c2c2c2;"></div>
<div style="left:718px;top:726px;width:1px;height:27px;background:#c2c2c2;"></div>
<div style="left:779px;top:726px;width:1px;height:27px;background:#c2c2c2;"></div>
<div style="left:816px;top:726px;width:1px;height:27px;background:#c2c2c2;"></div>
<div style="left:853px;top:726px;width:1px;height:27px;background:#c2c2c2;"></div>
<div class="t d" style="left:-1px;top:726px;width:52px;height:27px;line-height:27px;text-align:center;color:#fff;"><span class="c">中超</span></div>
<div class="t d k" style="left:53px;top:726px;width:72px;height:27px;line-height:27px;text-align:center;color:#000;"><span class="a">25-05-09</span></div>
<div class="t d" style="left:125px;top:726px;width:119px;height:27px;line-height:27px;text-align:center;color:#007000;"><span class="c">上海海港</span></div>
<div class="t d k sc" style="left:246px;top:726px;width:84px;height:27px;line-height:27px;text-align:center;color:#000;"><span style="color:#f00"><span class="a">3-1</span></span><span class="a">(1-1)</span></div>
<div class="t d k" style="left:331px;top:726px;width:35px;height:27px;line-height:27px;text-align:center;color:#000;"><span class="a">7-4</span></div>
<div class="t d k" style="left:366px;top:726px;width:85px;height:27px;line-height:27px;text-align:center;color:#000;"><span class="c">青岛海牛</span></div>
<div class="t d k" style="left:453px;top:726px;width:37px;height:27px;line-height:27px;text-align:center;color:#000;"><span class="a">0.96</span></div>
<div class="t d k" style="left:490px;top:726px;width:69px;height:27px;line-height:27px;text-align:center;color:#000;"><span class="c">球半</span></div>
<div class="t d k" style="left:561px;top:726px;width:37px;height:27px;line-height:27px;text-align:center;color:#000;"><span class="a">0.90</span></div>
<div class="t d k" style="left:599px;top:726px;width:59px;height:27px;line-height:27px;text-align:center;color:#000;"><span class="a">1.31</span></div>
<div class="t d k" style="left:659px;top:726px;width:59px;height:27px;line-height:27px;text-align:center;color:#000;"><span class="a">5.44</span></div>
<div class="t d k" style="left:719px;top:726px;width:60px;height:27px;line-height:27px;text-align:center;color:#000;"><span class="a">7.29</span></div>
<div class="t d" style="left:779px;top:726px;width:36px;height:27px;line-height:27px;text-align:center;color:#f00;"><span class="c">胜</span></div>
<div class="t d" style="left:816px;top:726px;width:36px;height:27px;line-height:27px;text-align:center;color:#f00;"><span class="c">赢</span></div>
<div class="t d" style="left:853px;top:726px;width:54px;height:27px;line-height:27px;text-align:center;color:#f00;"><span class="c">大</span></div>
<div class="sel2" style="left:460px;top:59px;width:59px;height:20px"></div>
<div class="t" style="left:465px;top:59px;height:20px;line-height:20px;color:#000;font-size:12px"><span class="a">Crow*</span></div>
<svg style="left:506px;top:66px" width="6.5" height="6"><path d="M0 0 L6.5 0 L3.25 6 Z" fill="#000"/></svg>
<div class="sel2" style="left:527px;top:59px;width:36px;height:20px"></div>
<div class="t" style="left:532px;top:59px;height:20px;line-height:20px;color:#000;font-size:12px"><span class="c">终</span></div>
<svg style="left:550px;top:66px" width="6.5" height="6"><path d="M0 0 L6.5 0 L3.25 6 Z" fill="#000"/></svg>
<div class="sel2" style="left:618px;top:59px;width:83px;height:20px"></div>
<div class="t" style="left:623px;top:59px;height:20px;line-height:20px;color:#000;font-size:12px"><span class="c">胜平负均值</span></div>
<svg style="left:688px;top:66px" width="6.5" height="6"><path d="M0 0 L6.5 0 L3.25 6 Z" fill="#000"/></svg>
<div class="sel2" style="left:709px;top:59px;width:36px;height:20px"></div>
<div class="t" style="left:714px;top:59px;height:20px;line-height:20px;color:#000;font-size:12px"><span class="c">终</span></div>
<svg style="left:732px;top:66px" width="6.5" height="6"><path d="M0 0 L6.5 0 L3.25 6 Z" fill="#000"/></svg>
<div class="sel2" style="left:818px;top:59px;width:47px;height:20px"></div>
<div class="t" style="left:823px;top:59px;height:20px;line-height:20px;color:#000;font-size:12px"><span class="c">全场</span></div>
<svg style="left:852px;top:66px" width="6.5" height="6"><path d="M0 0 L6.5 0 L3.25 6 Z" fill="#000"/></svg>
<div class="sel2" style="left:474px;top:434px;width:59px;height:20px"></div>
<div class="t" style="left:479px;top:434px;height:20px;line-height:20px;color:#000;font-size:12px"><span class="a">Crow*</span></div>
<svg style="left:520px;top:441px" width="6.5" height="6"><path d="M0 0 L6.5 0 L3.25 6 Z" fill="#000"/></svg>
<div class="sel2" style="left:542px;top:434px;width:35px;height:20px"></div>
<div class="t" style="left:547px;top:434px;height:20px;line-height:20px;color:#000;font-size:12px"><span class="c">终</span></div>
<svg style="left:564px;top:441px" width="6.5" height="6"><path d="M0 0 L6.5 0 L3.25 6 Z" fill="#000"/></svg>
<div class="sel2" style="left:625px;top:434px;width:84px;height:20px"></div>
<div class="t" style="left:630px;top:434px;height:20px;line-height:20px;color:#000;font-size:12px"><span class="c">胜平负均值</span></div>
<svg style="left:696px;top:441px" width="6.5" height="6"><path d="M0 0 L6.5 0 L3.25 6 Z" fill="#000"/></svg>
<div class="sel2" style="left:718px;top:434px;width:35px;height:20px"></div>
<div class="t" style="left:723px;top:434px;height:20px;line-height:20px;color:#000;font-size:12px"><span class="c">终</span></div>
<svg style="left:740px;top:441px" width="6.5" height="6"><path d="M0 0 L6.5 0 L3.25 6 Z" fill="#000"/></svg>
<div class="sel2" style="left:821px;top:434px;width:47px;height:20px"></div>
<div class="t" style="left:826px;top:434px;height:20px;line-height:20px;color:#000;font-size:12px"><span class="c">全场</span></div>
<svg style="left:855px;top:441px" width="6.5" height="6"><path d="M0 0 L6.5 0 L3.25 6 Z" fill="#000"/></svg>
</body></html>
